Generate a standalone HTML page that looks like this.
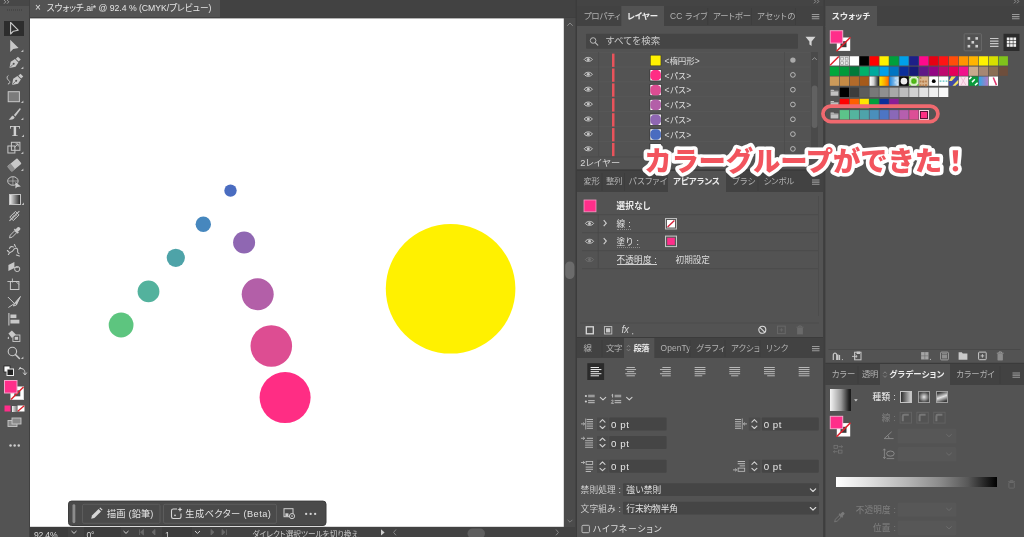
<!DOCTYPE html>
<html lang="ja"><head><meta charset="utf-8"><title>スウォッチ.ai - Illustrator</title><style>
html,body{margin:0;padding:0}
body{width:1024px;height:537px;overflow:hidden;background:#424242;position:relative;
 font-family:"Liberation Sans","Noto Sans CJK JP",sans-serif;}
#app{position:absolute;left:0;top:0;width:1024px;height:537px;overflow:hidden;background:#424242}
#app div,#app span,#app svg{position:absolute;box-sizing:border-box}
#app svg{overflow:visible}
.tt{white-space:nowrap}
#app{will-change:transform}
.t{white-space:nowrap;letter-spacing:0;font-feature-settings:"palt" 1;font-kerning:normal}
</style></head><body>
<div id="app">
<svg style="left:0px;top:0px" width="30" height="537"><rect x="0.00" y="0.00" width="30.00" height="537.00" fill="#535353"/></svg>
<svg style="left:0px;top:0px" width="30" height="6"><rect x="0.00" y="0.00" width="30.00" height="6.00" fill="#474747"/></svg>
<svg style="left:29px;top:0px" width="1" height="537"><rect x="0.00" y="0.00" width="1.00" height="537.00" fill="#414141"/></svg>
<svg style="left:3px;top:-1px;" width="8" height="7"><g transform="translate(0.00 0.40)"><path d="M1 0.5 L2.8 2.4 L1 4.3 M4 0.5 L5.8 2.4 L4 4.3" fill="none" stroke="#a8a8a8" stroke-width="0.9"/></g></svg>
<div style="left:7px;top:9px;width:16px;height:2px;background:repeating-linear-gradient(90deg,#474747 0 1px,transparent 1px 2px);"></div>
<svg style="left:4px;top:21px" width="20" height="15"><rect x="0.00" y="0.00" width="20.00" height="15.00" fill="#2d2d2d"/></svg>
<svg style="left:-1px;top:20px;" width="31" height="17"><g transform="translate(0.40 0.00)"><path d="M11.2 2.5 L11.2 14 L14 11.2 L18.8 10.2 Z" fill="none" stroke="#c8c8c8" stroke-width="1.1" stroke-linejoin="round"/></g></svg>
<svg style="left:-1px;top:37px;" width="31" height="18"><g transform="translate(0.40 0.50)"><path d="M10.8 2.2 L10.8 14.6 L13.8 11.6 L19.2 10.6 Z" fill="#c8c8c8"/><path d="M24 14.5 L24 12 L21.5 14.5z" fill="#bdbdbd"/></g></svg>
<svg style="left:-1px;top:54px;" width="31" height="18"><g transform="translate(0.40 0.50)"><g transform="rotate(45 15 8.5)"><path d="M13 1.5 h4 v3 h-4z" fill="#c8c8c8"/><path d="M12.6 5.3 h4.8 l1 5 l-3.4 5.2 l-3.4-5.2z" fill="#c8c8c8"/><circle cx="15" cy="9.5" r="1" fill="#535353"/><path d="M15 10.5 V15" stroke="#535353" stroke-width="0.7"/></g><path d="M24 14.5 L24 12 L21.5 14.5z" fill="#bdbdbd"/></g></svg>
<svg style="left:-1px;top:71px;" width="31" height="18"><g transform="translate(0.40 0.50)"><g transform="translate(2.5 0)"><g transform="rotate(45 15 8.5)"><path d="M13 1.5 h4 v3 h-4z" fill="#c8c8c8"/><path d="M12.6 5.3 h4.8 l1 5 l-3.4 5.2 l-3.4-5.2z" fill="#c8c8c8"/><circle cx="15" cy="9.5" r="1" fill="#535353"/><path d="M15 10.5 V15" stroke="#535353" stroke-width="0.7"/></g></g><path d="M9 4 C7 5 7.5 8 9.5 9 C11 10 10.5 12.5 8.5 12.5" fill="none" stroke="#c8c8c8" stroke-width="1"/></g></svg>
<svg style="left:-1px;top:88px;" width="31" height="18"><g transform="translate(0.40 0.50)"><rect x="8.8" y="3.2" width="11.2" height="10" fill="#7b7b7b" stroke="#c8c8c8" stroke-width="1"/><path d="M24 14.5 L24 12 L21.5 14.5z" fill="#bdbdbd"/></g></svg>
<svg style="left:-1px;top:105px;" width="31" height="18"><g transform="translate(0.40 0.50)"><path d="M20.5 2.5 L14.5 9.5 L16 11 L21.5 3.5z" fill="#c8c8c8"/><path d="M13.6 10.2 C11.5 10.2 11.5 13 9.3 14 C12 14.8 15.2 13.8 15.2 11.8z" fill="#c8c8c8"/><path d="M24 14.5 L24 12 L21.5 14.5z" fill="#bdbdbd"/></g></svg>
<span class="tt" style="left:8px;top:122px;width:14px;text-align:center;font-family:'Liberation Serif',serif;font-size:15.5px;font-weight:700;line-height:18px;color:#d0d0d0">T</span>
<svg style="left:0px;top:122px;" width="30" height="18"><g transform="translate(0.00 0.50)"><path d="M24 14.5 L24 12 L21.5 14.5z" fill="#bdbdbd"/></g></svg>
<svg style="left:-1px;top:139px;" width="31" height="18"><g transform="translate(0.40 0.50)"><rect x="8.5" y="6.5" width="7" height="7" fill="none" stroke="#c8c8c8" stroke-width="1"/><rect x="12" y="2.8" width="8.5" height="8" fill="none" stroke="#c8c8c8" stroke-width="1"/><path d="M15 8 L18.6 4.6 M18.8 7 V4.4 H16.2" fill="none" stroke="#c8c8c8" stroke-width="0.9"/><path d="M24 14.5 L24 12 L21.5 14.5z" fill="#bdbdbd"/></g></svg>
<svg style="left:-1px;top:156px;" width="31" height="18"><g transform="translate(0.40 0.50)"><g transform="rotate(-40 15 8.5)"><rect x="8.5" y="5" width="13" height="7" rx="1" fill="#c8c8c8"/><rect x="8.5" y="5" width="4.5" height="7" rx="1" fill="#8d8d8d"/></g><path d="M24 14.5 L24 12 L21.5 14.5z" fill="#bdbdbd"/></g></svg>
<svg style="left:-1px;top:173px;" width="31" height="18"><g transform="translate(0.40 0.50)"><ellipse cx="13.5" cy="7.5" rx="5.2" ry="4.3" fill="none" stroke="#c8c8c8" stroke-width="1"/><path d="M9 7.5 h9 M13.5 3.5 v8" stroke="#c8c8c8" stroke-width="0.6"/><path d="M16 8.5 L16 15 L17.8 13.4 L21.5 13 Z" fill="#c8c8c8"/></g></svg>
<div style="left:8.5px;top:193.5px;width:12px;height:11px;background:linear-gradient(90deg,#e8e8e8,#2c2c2c);border:1px solid #c4c4c4"></div>
<svg style="left:0px;top:190px;" width="30" height="18"><g transform="translate(0.00 0.50)"><path d="M24 14.5 L24 12 L21.5 14.5z" fill="#bdbdbd"/></g></svg>
<svg style="left:-1px;top:207px;" width="31" height="18"><g transform="translate(0.40 0.50)"><g transform="rotate(-45 15 8.5)"><path d="M8 8.5 H22" stroke="#c8c8c8" stroke-width="1"/><rect x="11" y="6" width="8" height="5" fill="none" stroke="#c8c8c8" stroke-width="0.9"/><path d="M13 6 v5 M15 6 v5 M17 6 v5" stroke="#c8c8c8" stroke-width="0.6"/></g></g></svg>
<svg style="left:-1px;top:224px;" width="31" height="18"><g transform="translate(0.40 0.50)"><g transform="rotate(45 15 8.5)"><rect x="13.3" y="1" width="3.4" height="4.5" rx="1.2" fill="#c8c8c8"/><rect x="12.2" y="5" width="5.6" height="1.6" fill="#c8c8c8"/><path d="M13.6 6.8 h2.8 v6.2 l-1.4 2.4 l-1.4-2.4z" fill="none" stroke="#c8c8c8" stroke-width="0.9"/></g></g></svg>
<svg style="left:-1px;top:241px;" width="31" height="18"><g transform="translate(0.40 0.50)"><path d="M9 13 C11 9 12 12 14 8.5 C15 6.5 17 6 18 7.5 C19 9 17 11 19.5 12 M10 7 C11 5 12.5 4.5 14 5.5 M15 3 l1 2 M9.5 10.5 l-1.5-1.5 M17 13.5 l3 1" fill="none" stroke="#c8c8c8" stroke-width="1.1" stroke-linecap="round"/></g></svg>
<svg style="left:-1px;top:258px;" width="31" height="18"><g transform="translate(0.40 0.50)"><path d="M9 6.5 L15 3.5 L15 9.5 L9 12.5z" fill="#c8c8c8"/><circle cx="17.8" cy="10.5" r="2.6" fill="none" stroke="#c8c8c8" stroke-width="1"/><path d="M14 9 h5" stroke="#c8c8c8" stroke-width="0.8"/></g></svg>
<svg style="left:-1px;top:276px;" width="31" height="17"><g transform="translate(0.40 0.00)"><rect x="11" y="5.5" width="8.5" height="8" fill="none" stroke="#c8c8c8" stroke-width="1"/><path d="M8 5.5 H12 M13 2.5 V6.5 M16.5 5.5 l3 3" stroke="#c8c8c8" stroke-width="0.9" fill="none"/></g></svg>
<svg style="left:-1px;top:293px;" width="31" height="18"><g transform="translate(0.40 0.50)"><path d="M8.5 3.5 L15 10 L9 14 M21 3 L15.5 9.5 L14 12.5 L17 11.5z" fill="none" stroke="#c8c8c8" stroke-width="1"/><path d="M21 3 L15.5 9.5 L17 11.5z" fill="#c8c8c8"/></g></svg>
<svg style="left:-1px;top:310px;" width="31" height="18"><g transform="translate(0.40 0.50)"><path d="M9.5 2.5 V15" stroke="#c8c8c8" stroke-width="1.1"/><rect x="11" y="4" width="6" height="3.6" fill="#c8c8c8"/><rect x="11" y="9.2" width="9" height="3.8" fill="#c8c8c8"/></g></svg>
<svg style="left:-1px;top:327px;" width="31" height="18"><g transform="translate(0.40 0.50)"><path d="M9 6 L12.5 3 L16.5 7 L12.5 10.5z" fill="#c8c8c8"/><rect x="13.5" y="7.5" width="7" height="6.5" fill="none" stroke="#c8c8c8" stroke-width="0.9"/><rect x="15.3" y="9.3" width="3.4" height="3" fill="#c8c8c8"/><path d="M9 9 c-1 1.5 -1 2.5 0 2.5 s1-1 0-2.5" fill="#c8c8c8"/></g></svg>
<svg style="left:-1px;top:344px;" width="31" height="18"><g transform="translate(0.40 0.50)"><circle cx="13" cy="7" r="4.2" fill="none" stroke="#c8c8c8" stroke-width="1.1"/><path d="M16 10 L20 14" stroke="#c8c8c8" stroke-width="1.6" stroke-linecap="round"/><path d="M24 14.5 L24 12 L21.5 14.5z" fill="#bdbdbd"/></g></svg>
<svg style="left:3px;top:365px;" width="12" height="12"><g transform="translate(0.00 0.00)"><rect x="1" y="1" width="6" height="6" fill="#fff" stroke="#222" stroke-width="0.8"/><rect x="4" y="4" width="6.5" height="6.5" fill="#222" stroke="#eee" stroke-width="1"/></g></svg>
<svg style="left:18px;top:365px;" width="10" height="12"><g transform="translate(0.00 0.00)"><path d="M2 3.5 C5.5 3 7 5 7 9 M0.8 4.8 L2.2 2.2 L4.2 4.4 M5.2 7.6 L7 10 L8.8 7.6" fill="none" stroke="#c8c8c8" stroke-width="1"/></g></svg>
<svg style="left:10px;top:386px" width="14" height="14"><rect x="0.75" y="0.75" width="13.00" height="13.00" fill="#ffffff" stroke="#ddd" stroke-width="0.5"/></svg>
<svg style="left:10px;top:386px;" width="14" height="14"><g transform="translate(0.50 0.50)"><rect x="3.8" y="3.8" width="6" height="6" fill="#535353"/><path d="M0.5 13 L13 0.5" stroke="#e0202a" stroke-width="1.5"/></g></svg>
<svg style="left:4px;top:380px" width="14" height="14"><rect x="0.50" y="0.50" width="12.50" height="12.50" fill="#ff2e8a" stroke="#f3a3c8" stroke-width="1.0"/></svg>
<svg style="left:4px;top:405px" width="7" height="7"><rect x="0.50" y="0.50" width="6.00" height="6.00" fill="#ff2e8a"/></svg>
<div style="left:11.5px;top:405.5px;width:5px;height:6px;background:linear-gradient(90deg,#f4f4f4,#777);"></div>
<svg style="left:17px;top:405px;" width="8" height="7"><g transform="translate(0.50 0.50)"><rect x="0" y="0" width="7" height="6" fill="#fff"/><path d="M0.3 5.8 L6.7 0.2" stroke="#e0202a" stroke-width="1.3"/></g></svg>
<svg style="left:7px;top:417px;" width="16" height="11"><g transform="translate(0.00 0.00)"><rect x="1" y="3.5" width="9" height="6" fill="#8a8a8a" stroke="#c8c8c8" stroke-width="0.9"/><rect x="5" y="1" width="9" height="6" fill="#8a8a8a" stroke="#c8c8c8" stroke-width="0.9"/></g></svg>
<svg style="left:9px;top:444px" width="3" height="3"><rect x="0.30" y="0.30" width="2.50" height="2.50" rx="1.25" fill="#cdcdcd"/></svg>
<svg style="left:13px;top:444px" width="3" height="3"><rect x="0.40" y="0.30" width="2.50" height="2.50" rx="1.25" fill="#cdcdcd"/></svg>
<svg style="left:17px;top:444px" width="3" height="3"><rect x="0.50" y="0.30" width="2.50" height="2.50" rx="1.25" fill="#cdcdcd"/></svg>
<svg style="left:30px;top:0px" width="547" height="18"><rect x="0.00" y="0.00" width="547.00" height="18.00" fill="#424242"/></svg>
<svg style="left:30px;top:0px" width="190" height="18"><rect x="0.00" y="0.00" width="190.00" height="18.00" fill="#535353"/></svg>
<svg style="left:30px;top:17px" width="547" height="2"><rect x="0.00" y="0.20" width="547.00" height="1.20" fill="#3f3f3f"/></svg>
<span class="t" style="left:35.00px;top:0.80px;font-size:10px;line-height:14px;color:#e0e0e0;font-weight:400;letter-spacing:0.000px;">×</span>
<span class="t" style="left:46.77px;top:0.90px;font-size:8.7px;line-height:14px;color:#e6e6e6;font-weight:400;letter-spacing:-0.033px;">スウォッチ.ai* @ 92.4 % (CMYK/プレビュー)</span>
<svg style="left:30px;top:18px" width="534" height="509"><rect x="0.00" y="0.40" width="533.80" height="508.40" fill="#ffffff"/></svg>
<svg style="left:30px;top:18px;" width="534" height="509"><g transform="translate(0.00 0.00)"><circle cx="200.5" cy="172.6" r="6.2" fill="#4a6cc0"/><circle cx="173.3" cy="206.2" r="7.7" fill="#4687be"/><circle cx="214.1" cy="224.5" r="11.0" fill="#8f67b2"/><circle cx="145.8" cy="239.8" r="9.1" fill="#4ea3a8"/><circle cx="118.5" cy="273.4" r="10.9" fill="#53b29d"/><circle cx="91.1" cy="307.0" r="12.4" fill="#5dc57f"/><circle cx="227.7" cy="276.2" r="16.0" fill="#b35fa8"/><circle cx="241.3" cy="328.0" r="20.8" fill="#dd4d92"/><circle cx="255.10000000000002" cy="379.6" r="25.5" fill="#ff2d84"/><circle cx="420.6" cy="270.8" r="64.8" fill="#fff100"/></g></svg>
<svg style="left:564px;top:18px" width="12" height="509"><rect x="0.00" y="0.00" width="12.00" height="509.00" fill="#4b4b4b"/></svg>
<svg style="left:575px;top:0px" width="3" height="537"><rect x="0.50" y="0.00" width="1.80" height="537.00" fill="#3c3c3c"/></svg>
<svg style="left:564px;top:18px;" width="12" height="12"><g transform="translate(0.00 0.00)"><path d="M3.3 7.8 L6 5 L8.7 7.8" fill="none" stroke="#8a8a8a" stroke-width="1"/></g></svg>
<svg style="left:564px;top:515px;" width="12" height="12"><g transform="translate(0.00 0.00)"><path d="M3.6 4.8 L6 7.2 L8.4 4.8" fill="none" stroke="#808080" stroke-width="1"/></g></svg>
<svg style="left:565px;top:261px" width="10" height="18"><rect x="0.20" y="0.50" width="9.20" height="17.50" rx="4.50" fill="#6b6b6b"/></svg>
<svg style="left:30px;top:527px" width="546" height="10"><rect x="0.00" y="0.00" width="546.00" height="10.00" fill="#424242"/></svg>
<svg style="left:30px;top:527px" width="38" height="10"><rect x="0.00" y="0.00" width="38.00" height="10.00" fill="#3c3c3c"/></svg>
<span class="t" style="left:34.07px;top:528.30px;font-size:8.6px;line-height:14px;color:#d8d8d8;font-weight:400;letter-spacing:-0.226px;">92.4%</span>
<svg style="left:69px;top:529px;" width="10" height="8"><g transform="translate(0.00 0.00)"><path d="M2.5 2 L5 4.4 L7.5 2" fill="none" stroke="#cfcfcf" stroke-width="1"/></g></svg>
<svg style="left:84px;top:527px" width="37" height="10"><rect x="0.00" y="0.00" width="37.00" height="10.00" fill="#3c3c3c"/></svg>
<span class="t" style="left:86.57px;top:528.30px;font-size:8.6px;line-height:14px;color:#d8d8d8;font-weight:400;letter-spacing:-0.239px;">0°</span>
<svg style="left:121px;top:529px;" width="10" height="8"><g transform="translate(0.00 0.00)"><path d="M2.5 2 L5 4.4 L7.5 2" fill="none" stroke="#cfcfcf" stroke-width="1"/></g></svg>
<svg style="left:136px;top:528px;" width="22" height="9"><g transform="translate(0.00 0.00)"><path d="M3.5 1.5 V7 M7.5 1.5 L4.5 4.2 L7.5 7z M19 1.5 L16 4.2 L19 7z" fill="#6a6a6a" stroke="#6a6a6a" stroke-width="0.8"/></g></svg>
<svg style="left:162px;top:527px" width="30" height="10"><rect x="0.00" y="0.00" width="30.00" height="10.00" fill="#3c3c3c"/></svg>
<span class="t" style="left:165.07px;top:528.30px;font-size:8.6px;line-height:14px;color:#d8d8d8;font-weight:400;letter-spacing:0.000px;">1</span>
<svg style="left:192px;top:529px;" width="11" height="8"><g transform="translate(0.50 0.00)"><path d="M2.5 2 L5 4.4 L7.5 2" fill="none" stroke="#cfcfcf" stroke-width="1"/></g></svg>
<svg style="left:208px;top:528px;" width="22" height="9"><g transform="translate(0.00 0.00)"><path d="M3 1.5 L6 4.2 L3 7z M14 1.5 L17 4.2 L14 7z M18.5 1.5 V7" fill="#6a6a6a" stroke="#6a6a6a" stroke-width="0.8"/></g></svg>
<span class="t" style="left:252.42px;top:528.40px;font-size:7.7px;line-height:14px;color:#c8c8c8;font-weight:400;letter-spacing:-0.031px;">ダイレクト選択ツールを切り換え</span>
<svg style="left:380px;top:528px;" width="6" height="9"><g transform="translate(0.00 0.00)"><path d="M1 1.2 L4.6 4.4 L1 7.6z" fill="#d0d0d0"/></g></svg>
<svg style="left:392px;top:528px;" width="6" height="9"><g transform="translate(0.00 0.00)"><path d="M4 1.5 L1.6 4.4 L4 7.3" fill="none" stroke="#8a8a8a" stroke-width="0.9"/></g></svg>
<svg style="left:467px;top:528px" width="18" height="11"><rect x="0.50" y="0.60" width="17.50" height="10.00" rx="5.00" fill="#5e5e5e"/></svg>
<svg style="left:554px;top:528px;" width="6" height="9"><g transform="translate(0.00 0.00)"><path d="M2 1.5 L4.4 4.4 L2 7.3" fill="none" stroke="#8a8a8a" stroke-width="0.9"/></g></svg>
<svg style="left:68px;top:500px" width="259" height="26"><rect x="0.50" y="1.10" width="257.50" height="24.40" rx="3.00" fill="#4a4a4a" stroke="#3d3d3d" stroke-width="1.0"/></svg>
<svg style="left:72px;top:504px" width="4" height="20"><rect x="0.50" y="0.20" width="2.80" height="19.00" rx="1.40" fill="#8c8c8c"/></svg>
<svg style="left:82px;top:503px" width="79" height="21"><rect x="0.50" y="1.30" width="77.50" height="19.00" rx="1.50" fill="#4a4a4a" stroke="#5c5c5c" stroke-width="1.0"/></svg>
<svg style="left:163px;top:503px" width="114" height="21"><rect x="0.50" y="1.30" width="113.00" height="19.00" rx="1.50" fill="#4a4a4a" stroke="#5c5c5c" stroke-width="1.0"/></svg>
<svg style="left:90px;top:507px;" width="13" height="13"><g transform="translate(0.00 0.00)"><path d="M1.2 11.8 L2 8.6 L8.6 2 L11 4.4 L4.4 11z" fill="#d6d6d6"/><path d="M9.4 1.2 L10.3 0.4 L12.6 2.7 L11.8 3.6z" fill="#d6d6d6"/></g></svg>
<span class="t" style="left:107.04px;top:507.00px;font-size:9.2px;line-height:14px;color:#e4e4e4;font-weight:400;letter-spacing:0.154px;">描画 (鉛筆)</span>
<svg style="left:170px;top:506px;" width="13" height="15"><g transform="translate(0.00 0.50)"><path d="M7 2.5 H3.2 Q1.5 2.5 1.5 4.2 V10.3 Q1.5 12 3.2 12 H9.3 Q11 12 11 10.3 V7" fill="none" stroke="#d6d6d6" stroke-width="1.1"/><path d="M10 0.5 l0.7 1.8 l1.8 0.7 l-1.8 0.7 l-0.7 1.8 l-0.7-1.8 l-1.8-0.7 l1.8-0.7z" fill="#d6d6d6"/><circle cx="5" cy="8.8" r="0.9" fill="#d6d6d6"/></g></svg>
<span class="t" style="left:185.34px;top:507.00px;font-size:9.2px;line-height:14px;color:#e4e4e4;font-weight:400;letter-spacing:0.428px;">生成ベクター (Beta)</span>
<svg style="left:283px;top:507px;" width="13" height="13"><g transform="translate(0.00 0.50)"><rect x="1" y="1.2" width="9" height="8" fill="none" stroke="#d0d0d0" stroke-width="1"/><rect x="2.4" y="5.8" width="3" height="3" fill="#d0d0d0"/><circle cx="9" cy="8.6" r="2.6" fill="#4a4a4a" stroke="#d0d0d0" stroke-width="1"/><circle cx="9" cy="8.6" r="0.8" fill="#d0d0d0"/></g></svg>
<svg style="left:305px;top:512px" width="3" height="4"><rect x="0.00" y="0.80" width="2.30" height="2.30" rx="1.15" fill="#d6d6d6"/></svg>
<svg style="left:309px;top:512px" width="3" height="4"><rect x="0.50" y="0.80" width="2.30" height="2.30" rx="1.15" fill="#d6d6d6"/></svg>
<svg style="left:314px;top:512px" width="3" height="4"><rect x="0.00" y="0.80" width="2.30" height="2.30" rx="1.15" fill="#d6d6d6"/></svg>
<svg style="left:577px;top:0px" width="447" height="6"><rect x="0.00" y="0.00" width="447.00" height="6.00" fill="#444444"/></svg>
<svg style="left:813px;top:-1px;" width="8" height="6"><g transform="translate(0.00 0.00)"><path d="M1 0.5 L2.8 2.4 L1 4.3 M4 0.5 L5.8 2.4 L4 4.3" fill="none" stroke="#9a9a9a" stroke-width="0.9"/></g></svg>
<svg style="left:1013px;top:-1px;" width="8" height="6"><g transform="translate(0.00 0.00)"><path d="M1 0.5 L2.8 2.4 L1 4.3 M4 0.5 L5.8 2.4 L4 4.3" fill="none" stroke="#9a9a9a" stroke-width="0.9"/></g></svg>
<svg style="left:823px;top:0px" width="3" height="537"><rect x="0.00" y="0.00" width="2.50" height="537.00" fill="#454545"/></svg>
<svg style="left:823px;top:0px" width="2" height="537"><rect x="0.50" y="0.00" width="1.20" height="537.00" fill="#3d3d3d"/></svg>
<svg style="left:577px;top:6px" width="246" height="20"><rect x="0.00" y="0.00" width="246.00" height="20.00" fill="#424242"/></svg>
<svg style="left:621px;top:6px" width="43" height="21"><rect x="0.30" y="0.00" width="42.70" height="21.00" fill="#535353"/></svg>
<span class="t" style="left:583.98px;top:8.50px;font-size:8.4px;line-height:14px;color:#b2b2b2;font-weight:400;letter-spacing:-0.197px;">プロパティ</span>
<span class="t" style="left:627.08px;top:8.50px;font-size:8.4px;line-height:14px;color:#ededed;font-weight:700;letter-spacing:-0.073px;">レイヤー</span>
<span class="t" style="left:669.98px;top:8.50px;font-size:8.4px;line-height:14px;color:#b2b2b2;font-weight:400;letter-spacing:0.264px;">CC ライブ</span>
<span class="t" style="left:713.18px;top:8.50px;font-size:8.4px;line-height:14px;color:#b2b2b2;font-weight:400;letter-spacing:-0.131px;">アートボー</span>
<span class="t" style="left:756.98px;top:8.50px;font-size:8.4px;line-height:14px;color:#b2b2b2;font-weight:400;letter-spacing:0.427px;">アセットの</span>
<svg style="left:811px;top:13px;" width="9" height="8"><g transform="translate(0.80 0.90)"><path d="M0 0.6 H7.5 M0 2.7 H7.5 M0 4.8 H7.5" stroke="#9a9a9a" stroke-width="1.1"/></g></svg>
<svg style="left:707px;top:8px" width="2" height="17"><rect x="0.30" y="0.00" width="1.00" height="17.00" fill="#3d3d3d"/></svg>
<svg style="left:751px;top:8px" width="1" height="17"><rect x="0.00" y="0.00" width="1.00" height="17.00" fill="#3d3d3d"/></svg>
<svg style="left:795px;top:8px" width="1" height="17"><rect x="0.00" y="0.00" width="1.00" height="17.00" fill="#3d3d3d"/></svg>
<svg style="left:577px;top:26px" width="246" height="144"><rect x="0.00" y="0.00" width="246.00" height="143.50" fill="#535353"/></svg>
<svg style="left:586px;top:33px" width="212" height="16"><rect x="0.00" y="0.80" width="212.00" height="15.00" rx="1.00" fill="#454545"/></svg>
<svg style="left:589px;top:36px;" width="11" height="11"><g transform="translate(0.20 0.60)"><circle cx="3.9" cy="3.9" r="2.8" fill="none" stroke="#bcbcbc" stroke-width="0.95"/><path d="M6 6 L8.6 8.6" stroke="#bcbcbc" stroke-width="1.1" stroke-linecap="round"/></g></svg>
<span class="t" style="left:605.73px;top:34.20px;font-size:9.5px;line-height:14px;color:#c8c8c8;font-weight:400;letter-spacing:0.216px;">すべてを検索</span>
<svg style="left:805px;top:36px;" width="11" height="11"><g transform="translate(0.00 0.00)"><path d="M0.5 0.8 H10.5 L6.6 5.4 V10 L4.4 8.6 V5.4z" fill="#d4d4d4"/></g></svg>
<svg style="left:581px;top:52px" width="229" height="1"><rect x="0.00" y="0.00" width="229.00" height="0.80" fill="#585858"/></svg>
<svg style="left:581px;top:66px" width="229" height="2"><rect x="0.00" y="0.50" width="229.00" height="0.80" fill="#595959"/></svg>
<svg style="left:583px;top:56px;" width="10" height="7"><g transform="translate(0.80 0.20)"><path d="M0.4 3.2 C2.2 0.5 6.8 0.5 8.6 3.2 C6.8 5.9 2.2 5.9 0.4 3.2z" fill="none" stroke="#c6c6c6" stroke-width="1"/><circle cx="4.5" cy="3.2" r="1.5" fill="#c6c6c6"/></g></svg>
<svg style="left:612px;top:53px" width="3" height="14"><rect x="0.00" y="0.60" width="2.50" height="13.30" fill="#e9535b"/></svg>
<svg style="left:650px;top:54px" width="12" height="13"><rect x="0.25" y="1.15" width="10.70" height="10.70" fill="#fff100" stroke="#2a2a2a" stroke-width="0.5"/></svg>
<span class="t" style="left:664.58px;top:53.70px;font-size:8.5px;line-height:14px;color:#dedede;font-weight:400;letter-spacing:-0.086px;">&lt;楕円形&gt;</span>
<svg style="left:790px;top:57px" width="6" height="6"><rect x="0.20" y="0.40" width="5.40" height="5.40" rx="2.70" fill="#a9a9a9"/></svg>
<svg style="left:581px;top:81px" width="229" height="2"><rect x="0.00" y="0.40" width="229.00" height="0.80" fill="#595959"/></svg>
<svg style="left:583px;top:71px;" width="10" height="7"><g transform="translate(0.80 0.10)"><path d="M0.4 3.2 C2.2 0.5 6.8 0.5 8.6 3.2 C6.8 5.9 2.2 5.9 0.4 3.2z" fill="none" stroke="#c6c6c6" stroke-width="1"/><circle cx="4.5" cy="3.2" r="1.5" fill="#c6c6c6"/></g></svg>
<svg style="left:612px;top:68px" width="3" height="14"><rect x="0.00" y="0.50" width="2.50" height="13.30" fill="#e9535b"/></svg>
<svg style="left:649px;top:69px" width="13" height="13"><rect x="1.00" y="0.70" width="11.20" height="11.20" fill="#ffffff" stroke="#222" stroke-width="0.6"/></svg>
<svg style="left:650px;top:70px;" width="11" height="11"><g transform="translate(0.30 0.00)"><clipPath id="c114"><rect x="0" y="0" width="10.6" height="10.6"/></clipPath><g clip-path="url(#c114)"><circle cx="5.3" cy="5.3" r="5.7" fill="#ff2d84"/></g></g></svg>
<span class="t" style="left:664.58px;top:68.50px;font-size:8.5px;line-height:14px;color:#dedede;font-weight:400;letter-spacing:0.363px;">&lt;パス&gt;</span>
<svg style="left:790px;top:72px" width="6" height="6"><rect x="0.55" y="0.55" width="4.70" height="4.70" rx="2.35" fill="none" stroke="#c2c2c2" stroke-width="0.9"/></svg>
<svg style="left:581px;top:96px" width="229" height="2"><rect x="0.00" y="0.30" width="229.00" height="0.80" fill="#595959"/></svg>
<svg style="left:583px;top:86px;" width="10" height="7"><g transform="translate(0.80 0.00)"><path d="M0.4 3.2 C2.2 0.5 6.8 0.5 8.6 3.2 C6.8 5.9 2.2 5.9 0.4 3.2z" fill="none" stroke="#c6c6c6" stroke-width="1"/><circle cx="4.5" cy="3.2" r="1.5" fill="#c6c6c6"/></g></svg>
<svg style="left:612px;top:83px" width="3" height="14"><rect x="0.00" y="0.40" width="2.50" height="13.30" fill="#e9535b"/></svg>
<svg style="left:649px;top:84px" width="13" height="12"><rect x="1.00" y="0.50" width="11.20" height="11.20" fill="#ffffff" stroke="#222" stroke-width="0.6"/></svg>
<svg style="left:650px;top:84px;" width="11" height="12"><g transform="translate(0.30 0.80)"><clipPath id="c121"><rect x="0" y="0" width="10.6" height="10.6"/></clipPath><g clip-path="url(#c121)"><circle cx="5.3" cy="5.3" r="5.7" fill="#dd4d92"/></g></g></svg>
<span class="t" style="left:664.58px;top:83.30px;font-size:8.5px;line-height:14px;color:#dedede;font-weight:400;letter-spacing:0.363px;">&lt;パス&gt;</span>
<svg style="left:790px;top:86px" width="6" height="7"><rect x="0.55" y="1.35" width="4.70" height="4.70" rx="2.35" fill="none" stroke="#c2c2c2" stroke-width="0.9"/></svg>
<svg style="left:581px;top:111px" width="229" height="1"><rect x="0.00" y="0.20" width="229.00" height="0.80" fill="#595959"/></svg>
<svg style="left:583px;top:100px;" width="10" height="8"><g transform="translate(0.80 0.90)"><path d="M0.4 3.2 C2.2 0.5 6.8 0.5 8.6 3.2 C6.8 5.9 2.2 5.9 0.4 3.2z" fill="none" stroke="#c6c6c6" stroke-width="1"/><circle cx="4.5" cy="3.2" r="1.5" fill="#c6c6c6"/></g></svg>
<svg style="left:612px;top:98px" width="3" height="14"><rect x="0.00" y="0.30" width="2.50" height="13.30" fill="#e9535b"/></svg>
<svg style="left:649px;top:99px" width="13" height="12"><rect x="1.00" y="0.30" width="11.20" height="11.20" fill="#ffffff" stroke="#222" stroke-width="0.6"/></svg>
<svg style="left:650px;top:99px;" width="11" height="12"><g transform="translate(0.30 0.60)"><clipPath id="c128"><rect x="0" y="0" width="10.6" height="10.6"/></clipPath><g clip-path="url(#c128)"><circle cx="5.3" cy="5.3" r="5.7" fill="#b35fa8"/></g></g></svg>
<span class="t" style="left:664.58px;top:98.10px;font-size:8.5px;line-height:14px;color:#dedede;font-weight:400;letter-spacing:0.363px;">&lt;パス&gt;</span>
<svg style="left:790px;top:101px" width="6" height="7"><rect x="0.55" y="1.15" width="4.70" height="4.70" rx="2.35" fill="none" stroke="#c2c2c2" stroke-width="0.9"/></svg>
<svg style="left:581px;top:126px" width="229" height="1"><rect x="0.00" y="0.10" width="229.00" height="0.80" fill="#595959"/></svg>
<svg style="left:583px;top:115px;" width="10" height="8"><g transform="translate(0.80 0.80)"><path d="M0.4 3.2 C2.2 0.5 6.8 0.5 8.6 3.2 C6.8 5.9 2.2 5.9 0.4 3.2z" fill="none" stroke="#c6c6c6" stroke-width="1"/><circle cx="4.5" cy="3.2" r="1.5" fill="#c6c6c6"/></g></svg>
<svg style="left:612px;top:113px" width="3" height="14"><rect x="0.00" y="0.20" width="2.50" height="13.30" fill="#e9535b"/></svg>
<svg style="left:649px;top:113px" width="13" height="13"><rect x="1.00" y="1.10" width="11.20" height="11.20" fill="#ffffff" stroke="#222" stroke-width="0.6"/></svg>
<svg style="left:650px;top:114px;" width="11" height="12"><g transform="translate(0.30 0.40)"><clipPath id="c135"><rect x="0" y="0" width="10.6" height="10.6"/></clipPath><g clip-path="url(#c135)"><circle cx="5.3" cy="5.3" r="5.7" fill="#8f67b2"/></g></g></svg>
<span class="t" style="left:664.58px;top:112.90px;font-size:8.5px;line-height:14px;color:#dedede;font-weight:400;letter-spacing:0.363px;">&lt;パス&gt;</span>
<svg style="left:790px;top:116px" width="6" height="7"><rect x="0.55" y="0.95" width="4.70" height="4.70" rx="2.35" fill="none" stroke="#c2c2c2" stroke-width="0.9"/></svg>
<svg style="left:581px;top:141px" width="229" height="1"><rect x="0.00" y="0.00" width="229.00" height="0.80" fill="#595959"/></svg>
<svg style="left:583px;top:130px;" width="10" height="8"><g transform="translate(0.80 0.70)"><path d="M0.4 3.2 C2.2 0.5 6.8 0.5 8.6 3.2 C6.8 5.9 2.2 5.9 0.4 3.2z" fill="none" stroke="#c6c6c6" stroke-width="1"/><circle cx="4.5" cy="3.2" r="1.5" fill="#c6c6c6"/></g></svg>
<svg style="left:612px;top:128px" width="3" height="14"><rect x="0.00" y="0.10" width="2.50" height="13.30" fill="#e9535b"/></svg>
<svg style="left:649px;top:128px" width="13" height="13"><rect x="1.00" y="0.90" width="11.20" height="11.20" fill="#ffffff" stroke="#222" stroke-width="0.6"/></svg>
<svg style="left:650px;top:129px;" width="11" height="11"><g transform="translate(0.30 0.20)"><clipPath id="c142"><rect x="0" y="0" width="10.6" height="10.6"/></clipPath><g clip-path="url(#c142)"><circle cx="5.3" cy="5.3" r="5.7" fill="#4a6cc0"/></g></g></svg>
<span class="t" style="left:664.58px;top:127.70px;font-size:8.5px;line-height:14px;color:#dedede;font-weight:400;letter-spacing:0.363px;">&lt;パス&gt;</span>
<svg style="left:790px;top:131px" width="6" height="6"><rect x="0.55" y="0.75" width="4.70" height="4.70" rx="2.35" fill="none" stroke="#c2c2c2" stroke-width="0.9"/></svg>
<svg style="left:581px;top:155px" width="229" height="2"><rect x="0.00" y="0.90" width="229.00" height="0.80" fill="#595959"/></svg>
<svg style="left:583px;top:145px;" width="10" height="8"><g transform="translate(0.80 0.60)"><path d="M0.4 3.2 C2.2 0.5 6.8 0.5 8.6 3.2 C6.8 5.9 2.2 5.9 0.4 3.2z" fill="none" stroke="#c6c6c6" stroke-width="1"/><circle cx="4.5" cy="3.2" r="1.5" fill="#c6c6c6"/></g></svg>
<svg style="left:612px;top:143px" width="3" height="14"><rect x="0.00" y="0.00" width="2.50" height="13.30" fill="#e9535b"/></svg>
<svg style="left:649px;top:143px" width="13" height="13"><rect x="1.00" y="0.70" width="11.20" height="11.20" fill="#ffffff" stroke="#222" stroke-width="0.6"/></svg>
<svg style="left:790px;top:146px" width="6" height="6"><rect x="0.55" y="0.55" width="4.70" height="4.70" rx="2.35" fill="none" stroke="#c2c2c2" stroke-width="0.9"/></svg>
<svg style="left:598px;top:52px" width="2" height="105"><rect x="0.30" y="0.00" width="0.80" height="104.30" fill="#4c4c4c"/></svg>
<svg style="left:784px;top:52px" width="1" height="105"><rect x="0.00" y="0.00" width="0.80" height="104.30" fill="#4c4c4c"/></svg>
<svg style="left:811px;top:52px" width="7" height="105"><rect x="0.00" y="0.00" width="7.00" height="104.50" fill="#4a4a4a"/></svg>
<svg style="left:811px;top:55px;" width="7" height="8"><g transform="translate(0.00 0.00)"><path d="M1.2 5 L3.5 2.6 L5.8 5" fill="none" stroke="#9a9a9a" stroke-width="0.9"/></g></svg>
<svg style="left:811px;top:85px" width="7" height="43"><rect x="0.70" y="0.60" width="5.80" height="42.40" rx="2.90" fill="#616161"/></svg>
<svg style="left:581px;top:156px" width="238" height="2"><rect x="0.00" y="0.50" width="238.00" height="0.80" fill="#474747"/></svg>
<span class="t" style="left:580.14px;top:156.20px;font-size:9.2px;line-height:14px;color:#d8d8d8;font-weight:400;letter-spacing:0.286px;">2レイヤー</span>
<svg style="left:577px;top:169px" width="246" height="2"><rect x="0.00" y="0.50" width="246.00" height="1.50" fill="#3b3b3b"/></svg>
<svg style="left:577px;top:171px" width="246" height="21"><rect x="0.00" y="0.00" width="246.00" height="21.00" fill="#424242"/></svg>
<svg style="left:668px;top:171px" width="58" height="22"><rect x="0.00" y="0.00" width="58.00" height="22.00" fill="#535353"/></svg>
<span class="t" style="left:583.48px;top:174.20px;font-size:8.4px;line-height:14px;color:#b2b2b2;font-weight:400;letter-spacing:-0.273px;">変形</span>
<span class="t" style="left:605.98px;top:174.20px;font-size:8.4px;line-height:14px;color:#b2b2b2;font-weight:400;letter-spacing:-0.273px;">整列</span>
<span class="t" style="left:628.78px;top:174.20px;font-size:8.4px;line-height:14px;color:#b2b2b2;font-weight:400;letter-spacing:0.436px;">パスファイ</span>
<span class="t" style="left:673.18px;top:174.20px;font-size:8.4px;line-height:14px;color:#ededed;font-weight:700;letter-spacing:-0.019px;">アピアランス</span>
<span class="t" style="left:732.38px;top:174.20px;font-size:8.4px;line-height:14px;color:#b2b2b2;font-weight:400;letter-spacing:0.347px;">ブラシ</span>
<span class="t" style="left:763.48px;top:174.20px;font-size:8.4px;line-height:14px;color:#b2b2b2;font-weight:400;letter-spacing:-0.134px;">シンボル</span>
<svg style="left:812px;top:179px;" width="8" height="8"><g transform="translate(0.00 0.40)"><path d="M0 0.6 H7.5 M0 2.7 H7.5 M0 4.8 H7.5" stroke="#9a9a9a" stroke-width="1.1"/></g></svg>
<svg style="left:601px;top:173px" width="2" height="18"><rect x="0.50" y="0.00" width="1.00" height="18.00" fill="#3d3d3d"/></svg>
<svg style="left:624px;top:173px" width="1" height="18"><rect x="0.00" y="0.00" width="1.00" height="18.00" fill="#3d3d3d"/></svg>
<svg style="left:757px;top:173px" width="2" height="18"><rect x="0.50" y="0.00" width="1.00" height="18.00" fill="#3d3d3d"/></svg>
<svg style="left:577px;top:192px" width="246" height="145"><rect x="0.00" y="0.00" width="246.00" height="145.00" fill="#535353"/></svg>
<svg style="left:583px;top:199px" width="14" height="14"><rect x="1.00" y="1.00" width="12.00" height="11.80" fill="#ff2e8a" stroke="#f59bc4" stroke-width="0.8"/></svg>
<span class="t" style="left:616.57px;top:199.40px;font-size:8.6px;line-height:14px;color:#ededed;font-weight:700;letter-spacing:0.201px;">選択なし</span>
<svg style="left:582px;top:214px" width="236" height="2"><rect x="0.00" y="0.30" width="236.00" height="0.80" fill="#4a4a4a"/></svg>
<svg style="left:582px;top:232px" width="236" height="2"><rect x="0.00" y="0.30" width="236.00" height="0.80" fill="#4a4a4a"/></svg>
<svg style="left:582px;top:250px" width="236" height="2"><rect x="0.00" y="0.30" width="236.00" height="0.80" fill="#4a4a4a"/></svg>
<svg style="left:582px;top:268px" width="236" height="2"><rect x="0.00" y="0.30" width="236.00" height="0.80" fill="#4a4a4a"/></svg>
<svg style="left:597px;top:214px" width="2" height="55"><rect x="0.80" y="0.30" width="0.80" height="54.00" fill="#484848"/></svg>
<svg style="left:818px;top:196px" width="1" height="120"><rect x="0.00" y="0.00" width="0.80" height="120.00" fill="#4c4c4c"/></svg>
<svg style="left:585px;top:220px;" width="9" height="7"><g transform="translate(0.00 0.20)"><path d="M0.4 3.2 C2.2 0.5 6.8 0.5 8.6 3.2 C6.8 5.9 2.2 5.9 0.4 3.2z" fill="none" stroke="#c6c6c6" stroke-width="1"/><circle cx="4.5" cy="3.2" r="1.5" fill="#c6c6c6"/></g></svg>
<svg style="left:602px;top:219px;" width="6" height="9"><g transform="translate(0.50 0.20)"><path d="M1.2 1 L3.8 4 L1.2 7" fill="none" stroke="#cfcfcf" stroke-width="1.1"/></g></svg>
<span class="t" style="left:616.57px;top:216.60px;font-size:8.6px;line-height:14px;color:#e2e2e2;font-weight:400;letter-spacing:0.314px;border-bottom:0.7px dotted #8c8c8c;height:13px">線 :</span>
<svg style="left:665px;top:218px;" width="12" height="12"><g transform="translate(0.00 0.00)"><rect x="0.5" y="0.5" width="11" height="10.5" fill="#5a5a5a" stroke="#bdbdbd" stroke-width="1"/><rect x="2" y="2" width="8" height="7.5" fill="#fff"/><path d="M2.6 9 L9.4 2.5" stroke="#d6203a" stroke-width="1.4"/></g></svg>
<svg style="left:585px;top:238px;" width="9" height="7"><g transform="translate(0.00 0.10)"><path d="M0.4 3.2 C2.2 0.5 6.8 0.5 8.6 3.2 C6.8 5.9 2.2 5.9 0.4 3.2z" fill="none" stroke="#c6c6c6" stroke-width="1"/><circle cx="4.5" cy="3.2" r="1.5" fill="#c6c6c6"/></g></svg>
<svg style="left:602px;top:237px;" width="6" height="9"><g transform="translate(0.50 0.10)"><path d="M1.2 1 L3.8 4 L1.2 7" fill="none" stroke="#cfcfcf" stroke-width="1.1"/></g></svg>
<span class="t" style="left:616.57px;top:234.50px;font-size:8.6px;line-height:14px;color:#e2e2e2;font-weight:400;letter-spacing:0.608px;border-bottom:0.7px dotted #8c8c8c;height:13px">塗り :</span>
<svg style="left:665px;top:235px;" width="12" height="13"><g transform="translate(0.00 0.60)"><rect x="0.5" y="0.5" width="11" height="10.5" fill="#5a5a5a" stroke="#c8c8c8" stroke-width="1"/><rect x="2.2" y="2.2" width="7.6" height="7.1" fill="#ff2e8a"/></g></svg>
<svg style="left:585px;top:256px;" width="9" height="7"><g transform="translate(0.00 0.40)"><path d="M0.4 3.2 C2.2 0.5 6.8 0.5 8.6 3.2 C6.8 5.9 2.2 5.9 0.4 3.2z" fill="none" stroke="#6f6f6f" stroke-width="1"/><circle cx="4.5" cy="3.2" r="1.5" fill="#6f6f6f"/></g></svg>
<span class="t" style="left:616.57px;top:252.80px;font-size:8.6px;line-height:14px;color:#e2e2e2;font-weight:400;letter-spacing:0.182px;border-bottom:0.8px solid #cfcfcf;height:12.6px">不透明度 :</span>
<span class="t" style="left:675.57px;top:252.80px;font-size:8.6px;line-height:14px;color:#dcdcdc;font-weight:400;letter-spacing:-0.009px;">初期設定</span>
<svg style="left:580px;top:322px" width="239" height="2"><rect x="0.00" y="0.60" width="239.00" height="0.80" fill="#4b4b4b"/></svg>
<svg style="left:585px;top:326px;" width="10" height="9"><g transform="translate(0.50 0.00)"><rect x="0.8" y="0.8" width="7" height="7" fill="none" stroke="#dadada" stroke-width="1.3"/></g></svg>
<svg style="left:603px;top:326px;" width="10" height="9"><g transform="translate(0.80 0.00)"><rect x="0.6" y="0.6" width="7.4" height="7.4" fill="none" stroke="#c4c4c4" stroke-width="0.9"/><rect x="2.2" y="2.2" width="4.2" height="4.2" fill="#c8c8c8"/></g></svg>
<span class="t" style="left:621.50px;top:322.80px;font-size:10px;line-height:14px;color:#d2d2d2;font-weight:400;letter-spacing:0.000px;font-style:italic;letter-spacing:-0.3px">fx</span>
<svg style="left:632px;top:333px" width="2" height="2"><rect x="0.20" y="0.00" width="1.00" height="1.40" fill="#c0c0c0"/></svg>
<svg style="left:758px;top:325px;" width="9" height="10"><g transform="translate(0.00 0.50)"><circle cx="4.3" cy="4.3" r="3.5" fill="none" stroke="#dcdcdc" stroke-width="1.1"/><path d="M1.9 1.9 L6.7 6.7" stroke="#dcdcdc" stroke-width="1.1"/></g></svg>
<svg style="left:777px;top:325px;" width="9" height="10"><g transform="translate(0.00 0.50)"><rect x="0.6" y="0.6" width="7.6" height="7.6" fill="none" stroke="#6a6a6a" stroke-width="0.9"/><path d="M4.4 2.6 V6.2 M2.6 4.4 H6.2" stroke="#6a6a6a" stroke-width="0.8"/></g></svg>
<svg style="left:795px;top:325px;" width="10" height="10"><g transform="translate(0.50 0.00)"><path d="M1 2.2 H8 M3.2 2 V1 H5.8 V2" stroke="#6c6c6c" stroke-width="0.9" fill="none"/><rect x="1.6" y="3" width="5.8" height="6.4" fill="#6a6a6a"/></g></svg>
<svg style="left:577px;top:337px" width="246" height="2"><rect x="0.00" y="0.00" width="246.00" height="1.20" fill="#3b3b3b"/></svg>
<svg style="left:577px;top:338px" width="246" height="20"><rect x="0.00" y="0.00" width="246.00" height="20.00" fill="#424242"/></svg>
<svg style="left:624px;top:338px" width="31" height="21"><rect x="0.00" y="0.00" width="30.30" height="21.00" fill="#535353"/></svg>
<span class="t" style="left:583.48px;top:340.70px;font-size:8.4px;line-height:14px;color:#b2b2b2;font-weight:400;letter-spacing:-0.070px;">線</span>
<span class="t" style="left:605.98px;top:340.70px;font-size:8.4px;line-height:14px;color:#b2b2b2;font-weight:400;letter-spacing:-0.273px;">文字</span>
<span class="t" style="left:633.38px;top:340.70px;font-size:8.4px;line-height:14px;color:#ededed;font-weight:700;letter-spacing:-0.540px;">段落</span>
<span class="t" style="left:660.58px;top:340.70px;font-size:8.4px;line-height:14px;color:#b2b2b2;font-weight:400;letter-spacing:0.093px;">OpenTy</span>
<span class="t" style="left:696.28px;top:340.70px;font-size:8.4px;line-height:14px;color:#b2b2b2;font-weight:400;letter-spacing:0.237px;">グラフィ</span>
<span class="t" style="left:730.98px;top:340.70px;font-size:8.4px;line-height:14px;color:#b2b2b2;font-weight:400;letter-spacing:0.047px;">アクショ</span>
<span class="t" style="left:765.88px;top:340.70px;font-size:8.4px;line-height:14px;color:#b2b2b2;font-weight:400;letter-spacing:0.331px;">リンク</span>
<svg style="left:812px;top:345px;" width="8" height="8"><g transform="translate(0.00 0.90)"><path d="M0 0.6 H7.5 M0 2.7 H7.5 M0 4.8 H7.5" stroke="#9a9a9a" stroke-width="1.1"/></g></svg>
<svg style="left:601px;top:340px" width="2" height="17"><rect x="0.50" y="0.00" width="1.00" height="17.00" fill="#3d3d3d"/></svg>
<svg style="left:689px;top:340px" width="2" height="17"><rect x="0.50" y="0.00" width="1.00" height="17.00" fill="#3d3d3d"/></svg>
<svg style="left:724px;top:340px" width="2" height="17"><rect x="0.50" y="0.00" width="1.00" height="17.00" fill="#3d3d3d"/></svg>
<svg style="left:759px;top:340px" width="2" height="17"><rect x="0.50" y="0.00" width="1.00" height="17.00" fill="#3d3d3d"/></svg>
<svg style="left:625px;top:343px;" width="7" height="10"><g transform="translate(0.50 0.50)"><path d="M1.3 3.6 L3 1.8 L4.7 3.6 M1.3 5.6 L3 7.4 L4.7 5.6" fill="none" stroke="#8f8f8f" stroke-width="0.8"/></g></svg>
<svg style="left:577px;top:358px" width="246" height="179"><rect x="0.00" y="0.00" width="246.00" height="179.00" fill="#535353"/></svg>
<svg style="left:587px;top:363px" width="18" height="17"><rect x="0.30" y="0.20" width="16.80" height="16.80" fill="#2b2b2b"/></svg>
<svg style="left:590px;top:366px;" width="12" height="11"><g transform="translate(0.50 0.80)"><rect x="0.1" y="0.2" width="8.4" height="0.95" fill="#f2f2f2"/><rect x="0.1" y="2.2800000000000002" width="10.8" height="0.95" fill="#f2f2f2"/><rect x="0.1" y="4.36" width="8.4" height="0.95" fill="#f2f2f2"/><rect x="0.1" y="6.44" width="10.8" height="0.95" fill="#f2f2f2"/><rect x="0.1" y="8.52" width="8.4" height="0.95" fill="#f2f2f2"/></g></svg>
<svg style="left:625px;top:366px;" width="12" height="11"><g transform="translate(0.18 0.80)"><rect x="1.3" y="0.2" width="8.4" height="0.95" fill="#bdbdbd"/><rect x="0.1" y="2.2800000000000002" width="10.8" height="0.95" fill="#bdbdbd"/><rect x="1.9000000000000001" y="4.36" width="7.2" height="0.95" fill="#bdbdbd"/><rect x="0.1" y="6.44" width="10.8" height="0.95" fill="#bdbdbd"/><rect x="1.3" y="8.52" width="8.4" height="0.95" fill="#bdbdbd"/></g></svg>
<svg style="left:659px;top:366px;" width="12" height="11"><g transform="translate(0.86 0.80)"><rect x="2.5" y="0.2" width="8.4" height="0.95" fill="#bdbdbd"/><rect x="0.1" y="2.2800000000000002" width="10.8" height="0.95" fill="#bdbdbd"/><rect x="2.5" y="4.36" width="8.4" height="0.95" fill="#bdbdbd"/><rect x="0.1" y="6.44" width="10.8" height="0.95" fill="#bdbdbd"/><rect x="2.1" y="8.52" width="8.8" height="0.95" fill="#bdbdbd"/></g></svg>
<svg style="left:694px;top:366px;" width="12" height="11"><g transform="translate(0.54 0.80)"><rect x="0.1" y="0.2" width="10.8" height="0.95" fill="#bdbdbd"/><rect x="0.1" y="2.2800000000000002" width="10.8" height="0.95" fill="#bdbdbd"/><rect x="0.1" y="4.36" width="10.8" height="0.95" fill="#bdbdbd"/><rect x="0.1" y="6.44" width="10.8" height="0.95" fill="#bdbdbd"/><rect x="0.1" y="8.52" width="7.6" height="0.95" fill="#bdbdbd"/></g></svg>
<svg style="left:729px;top:366px;" width="12" height="11"><g transform="translate(0.22 0.80)"><rect x="0.1" y="0.2" width="10.8" height="0.95" fill="#bdbdbd"/><rect x="0.1" y="2.2800000000000002" width="10.8" height="0.95" fill="#bdbdbd"/><rect x="0.1" y="4.36" width="10.8" height="0.95" fill="#bdbdbd"/><rect x="0.1" y="6.44" width="10.8" height="0.95" fill="#bdbdbd"/><rect x="1.9000000000000001" y="8.52" width="7.2" height="0.95" fill="#bdbdbd"/></g></svg>
<svg style="left:763px;top:366px;" width="12" height="11"><g transform="translate(0.90 0.80)"><rect x="0.1" y="0.2" width="10.8" height="0.95" fill="#bdbdbd"/><rect x="0.1" y="2.2800000000000002" width="10.8" height="0.95" fill="#bdbdbd"/><rect x="0.1" y="4.36" width="10.8" height="0.95" fill="#bdbdbd"/><rect x="0.1" y="6.44" width="10.8" height="0.95" fill="#bdbdbd"/><rect x="3.3000000000000003" y="8.52" width="7.6" height="0.95" fill="#bdbdbd"/></g></svg>
<svg style="left:798px;top:366px;" width="12" height="11"><g transform="translate(0.58 0.80)"><rect x="0.1" y="0.2" width="10.8" height="0.95" fill="#bdbdbd"/><rect x="0.1" y="2.2800000000000002" width="10.8" height="0.95" fill="#bdbdbd"/><rect x="0.1" y="4.36" width="10.8" height="0.95" fill="#bdbdbd"/><rect x="0.1" y="6.44" width="10.8" height="0.95" fill="#bdbdbd"/><rect x="0.1" y="8.52" width="10.8" height="0.95" fill="#bdbdbd"/></g></svg>
<svg style="left:584px;top:393px;" width="12" height="12"><g transform="translate(0.50 0.50)"><circle cx="1.4" cy="2.5" r="1.1" fill="#cfcfcf"/><rect x="3.6" y="1.2" width="6.6" height="2.6" fill="#9a9a9a"/><circle cx="1.4" cy="8" r="1.1" fill="#cfcfcf"/><path d="M3.6 7.2 H10.2 M3.6 9.2 H10.2" stroke="#cfcfcf" stroke-width="0.9"/></g></svg>
<svg style="left:599px;top:396px;" width="8" height="5"><g transform="translate(0.30 0.30)"><path d="M1 1 L3.7 3.6 L6.4 1" fill="none" stroke="#cfcfcf" stroke-width="1.1" stroke-linecap="round" stroke-linejoin="round"/></g></svg>
<svg style="left:611px;top:393px;" width="11" height="12"><g transform="translate(0.00 0.50)"><path d="M1.6 0.8 V4 M0.6 1.6 L1.6 0.8" stroke="#cfcfcf" stroke-width="0.9" fill="none"/><rect x="3.6" y="1.2" width="6.6" height="2.6" fill="#9a9a9a"/><path d="M0.4 7 C1.4 6 2.6 6.8 1.8 8 L0.4 9.8 H2.8" stroke="#cfcfcf" stroke-width="0.8" fill="none"/><path d="M3.6 7.2 H10.2 M3.6 9.2 H10.2" stroke="#cfcfcf" stroke-width="0.9"/></g></svg>
<svg style="left:625px;top:396px;" width="8" height="5"><g transform="translate(0.60 0.30)"><path d="M1 1 L3.7 3.6 L6.4 1" fill="none" stroke="#cfcfcf" stroke-width="1.1" stroke-linecap="round" stroke-linejoin="round"/></g></svg>
<svg style="left:582px;top:418px;" width="12" height="12"><g transform="translate(0.50 0.50)"><path d="M3.2 0 V11" stroke="#c4c4c4" stroke-width="0.7"/><path d="M4.2 1.0 H10.5" stroke="#c4c4c4" stroke-width="0.9"/><path d="M4.2 3.2 H10.5" stroke="#c4c4c4" stroke-width="0.9"/><path d="M4.2 5.4 H10.5" stroke="#c4c4c4" stroke-width="0.9"/><path d="M4.2 7.6000000000000005 H10.5" stroke="#c4c4c4" stroke-width="0.9"/><path d="M4.2 9.8 H10.5" stroke="#c4c4c4" stroke-width="0.9"/><path d="M-1.5 5.4 H2 M0.6 4 L2.2 5.4 L0.6 6.8" stroke="#c4c4c4" stroke-width="0.8" fill="none"/></g></svg>
<svg style="left:597px;top:417px" width="12" height="14"><rect x="0.00" y="0.60" width="11.50" height="13.00" fill="#4b4b4b"/></svg>
<svg style="left:609px;top:417px" width="58" height="14"><rect x="0.20" y="0.60" width="57.40" height="13.00" rx="1.00" fill="#454545"/></svg>
<svg style="left:599px;top:418px;" width="7" height="13"><g transform="translate(0.00 0.10)"><path d="M1 4 L3.5 1.6 L6 4 M1 8 L3.5 10.4 L6 8" fill="none" stroke="#cfcfcf" stroke-width="1.1" stroke-linecap="round" stroke-linejoin="round"/></g></svg>
<span class="t" style="left:611.11px;top:418.20px;font-size:9.7px;line-height:14px;color:#e6e6e6;font-weight:400;letter-spacing:0.517px;">0 pt</span>
<svg style="left:734px;top:418px;" width="12" height="12"><g transform="translate(0.50 0.50)"><path d="M7.8 0 V11" stroke="#c4c4c4" stroke-width="0.7"/><path d="M0.5 1.0 H6.6" stroke="#c4c4c4" stroke-width="0.9"/><path d="M0.5 3.2 H6.6" stroke="#c4c4c4" stroke-width="0.9"/><path d="M0.5 5.4 H6.6" stroke="#c4c4c4" stroke-width="0.9"/><path d="M0.5 7.6000000000000005 H6.6" stroke="#c4c4c4" stroke-width="0.9"/><path d="M0.5 9.8 H6.6" stroke="#c4c4c4" stroke-width="0.9"/><path d="M12.5 5.4 H9 M10.4 4 L8.8 5.4 L10.4 6.8" stroke="#c4c4c4" stroke-width="0.8" fill="none"/></g></svg>
<svg style="left:748px;top:417px" width="13" height="14"><rect x="0.90" y="0.60" width="11.50" height="13.00" fill="#4b4b4b"/></svg>
<svg style="left:761px;top:417px" width="58" height="14"><rect x="0.80" y="0.60" width="57.00" height="13.00" rx="1.00" fill="#454545"/></svg>
<svg style="left:750px;top:418px;" width="8" height="13"><g transform="translate(0.90 0.10)"><path d="M1 4 L3.5 1.6 L6 4 M1 8 L3.5 10.4 L6 8" fill="none" stroke="#cfcfcf" stroke-width="1.1" stroke-linecap="round" stroke-linejoin="round"/></g></svg>
<span class="t" style="left:763.71px;top:418.20px;font-size:9.7px;line-height:14px;color:#e6e6e6;font-weight:400;letter-spacing:0.517px;">0 pt</span>
<svg style="left:582px;top:437px;" width="12" height="12"><g transform="translate(0.50 0.10)"><path d="M-1.5 1.2 H2 M0.6 -0.2 L2.2 1.2 L0.6 2.6" stroke="#c4c4c4" stroke-width="0.8" fill="none"/><path d="M4.4 1.2 H10.5" stroke="#c4c4c4" stroke-width="0.9"/><path d="M2.6 3.6 H10.5 M2.6 5.8 H10.5 M2.6 8 H10.5 M2.6 10.2 H10.5" stroke="#9d9d9d" stroke-width="1.2"/></g></svg>
<svg style="left:597px;top:436px" width="12" height="13"><rect x="0.00" y="0.00" width="11.50" height="13.00" fill="#4b4b4b"/></svg>
<svg style="left:609px;top:436px" width="58" height="13"><rect x="0.20" y="0.00" width="57.40" height="13.00" rx="1.00" fill="#454545"/></svg>
<svg style="left:599px;top:436px;" width="7" height="13"><g transform="translate(0.00 0.50)"><path d="M1 4 L3.5 1.6 L6 4 M1 8 L3.5 10.4 L6 8" fill="none" stroke="#cfcfcf" stroke-width="1.1" stroke-linecap="round" stroke-linejoin="round"/></g></svg>
<span class="t" style="left:611.11px;top:436.60px;font-size:9.7px;line-height:14px;color:#e6e6e6;font-weight:400;letter-spacing:0.517px;">0 pt</span>
<svg style="left:582px;top:460px;" width="12" height="12"><g transform="translate(0.50 0.90)"><path d="M-1.5 1.6 H2 M0.6 0.2 L2.2 1.6 L0.6 3" stroke="#c4c4c4" stroke-width="0.8" fill="none"/><rect x="3.6" y="0.5" width="6.6" height="3.2" fill="none" stroke="#c4c4c4" stroke-width="0.8"/><path d="M3.2 6.2 H10.5 M3.2 8.4 H10.5 M3.2 10.6 H8.5" stroke="#c4c4c4" stroke-width="0.9"/></g></svg>
<svg style="left:597px;top:459px" width="12" height="14"><rect x="0.00" y="0.80" width="11.50" height="13.00" fill="#4b4b4b"/></svg>
<svg style="left:609px;top:459px" width="58" height="14"><rect x="0.20" y="0.80" width="57.40" height="13.00" rx="1.00" fill="#454545"/></svg>
<svg style="left:599px;top:460px;" width="7" height="13"><g transform="translate(0.00 0.30)"><path d="M1 4 L3.5 1.6 L6 4 M1 8 L3.5 10.4 L6 8" fill="none" stroke="#cfcfcf" stroke-width="1.1" stroke-linecap="round" stroke-linejoin="round"/></g></svg>
<span class="t" style="left:611.11px;top:460.40px;font-size:9.7px;line-height:14px;color:#e6e6e6;font-weight:400;letter-spacing:0.517px;">0 pt</span>
<svg style="left:734px;top:460px;" width="12" height="12"><g transform="translate(0.50 0.90)"><path d="M3.2 0.6 H10.5 M3.2 2.8 H10.5 M5.2 5 H10.5" stroke="#c4c4c4" stroke-width="0.9"/><rect x="3.6" y="7.2" width="6.6" height="3.2" fill="none" stroke="#c4c4c4" stroke-width="0.8"/><path d="M-1.5 9 H2 M0.6 7.6 L2.2 9 L0.6 10.4" stroke="#c4c4c4" stroke-width="0.8" fill="none"/></g></svg>
<svg style="left:748px;top:459px" width="13" height="14"><rect x="0.90" y="0.80" width="11.50" height="13.00" fill="#4b4b4b"/></svg>
<svg style="left:761px;top:459px" width="58" height="14"><rect x="0.80" y="0.80" width="57.00" height="13.00" rx="1.00" fill="#454545"/></svg>
<svg style="left:750px;top:460px;" width="8" height="13"><g transform="translate(0.90 0.30)"><path d="M1 4 L3.5 1.6 L6 4 M1 8 L3.5 10.4 L6 8" fill="none" stroke="#cfcfcf" stroke-width="1.1" stroke-linecap="round" stroke-linejoin="round"/></g></svg>
<span class="t" style="left:763.71px;top:460.40px;font-size:9.7px;line-height:14px;color:#e6e6e6;font-weight:400;letter-spacing:0.517px;">0 pt</span>
<span class="t" style="left:580.57px;top:483.00px;font-size:8.7px;line-height:14px;color:#cfcfcf;font-weight:400;letter-spacing:0.144px;">禁則処理 :</span>
<svg style="left:623px;top:483px" width="196" height="13"><rect x="0.00" y="0.20" width="196.00" height="12.80" rx="1.00" fill="#454545"/></svg>
<span class="t" style="left:626.37px;top:483.00px;font-size:8.7px;line-height:14px;color:#e4e4e4;font-weight:400;letter-spacing:0.230px;">強い禁則</span>
<svg style="left:809px;top:487px;" width="8" height="6"><g transform="translate(0.30 0.90)"><path d="M1 1 L3.7 3.6 L6.4 1" fill="none" stroke="#dddddd" stroke-width="1.1" stroke-linecap="round" stroke-linejoin="round"/></g></svg>
<span class="t" style="left:580.57px;top:501.60px;font-size:8.7px;line-height:14px;color:#cfcfcf;font-weight:400;letter-spacing:0.178px;">文字組み :</span>
<svg style="left:623px;top:501px" width="196" height="14"><rect x="0.00" y="0.80" width="196.00" height="12.80" rx="1.00" fill="#454545"/></svg>
<span class="t" style="left:626.37px;top:501.60px;font-size:8.7px;line-height:14px;color:#e4e4e4;font-weight:400;letter-spacing:-0.119px;">行末約物半角</span>
<svg style="left:809px;top:506px;" width="8" height="6"><g transform="translate(0.30 0.50)"><path d="M1 1 L3.7 3.6 L6.4 1" fill="none" stroke="#dddddd" stroke-width="1.1" stroke-linecap="round" stroke-linejoin="round"/></g></svg>
<svg style="left:581px;top:524px" width="9" height="10"><rect x="1.00" y="1.30" width="7.40" height="7.40" rx="1.00" fill="none" stroke="#bdbdbd" stroke-width="1.0"/></svg>
<span class="t" style="left:592.86px;top:522.40px;font-size:8.8px;line-height:14px;color:#dcdcdc;font-weight:400;letter-spacing:0.842px;">ハイフネーション</span>
<svg style="left:825px;top:6px" width="199" height="20"><rect x="0.50" y="0.00" width="198.50" height="20.00" fill="#424242"/></svg>
<svg style="left:825px;top:6px" width="52" height="21"><rect x="0.50" y="0.00" width="51.50" height="21.00" fill="#535353"/></svg>
<span class="t" style="left:831.88px;top:8.50px;font-size:8.4px;line-height:14px;color:#ededed;font-weight:700;letter-spacing:0.183px;">スウォッチ</span>
<svg style="left:1012px;top:13px;" width="8" height="8"><g transform="translate(0.00 0.90)"><path d="M0 0.6 H7.5 M0 2.7 H7.5 M0 4.8 H7.5" stroke="#9a9a9a" stroke-width="1.1"/></g></svg>
<svg style="left:825px;top:26px" width="199" height="337"><rect x="0.50" y="0.00" width="198.50" height="337.00" fill="#535353"/></svg>
<svg style="left:836px;top:37px;" width="15" height="14"><g transform="translate(0.80 0.50)"><rect x="0" y="0" width="13.4" height="13.4" fill="#fff"/><rect x="3.7" y="3.7" width="6" height="6" fill="#3a3a3a"/><path d="M-0.3 13.7 L13.7 -0.3" stroke="#e0202a" stroke-width="1.6"/></g></svg>
<svg style="left:829px;top:30px" width="15" height="14"><rect x="1.30" y="0.70" width="12.40" height="12.40" fill="#ff2e8a" stroke="#f7a6cb" stroke-width="1.0"/></svg>
<svg style="left:963px;top:33px" width="19" height="19"><rect x="1.20" y="0.80" width="17.20" height="17.00" rx="0.50" fill="none" stroke="#6a6a6a" stroke-width="1.0"/></svg>
<svg style="left:966px;top:36px;" width="13" height="13"><g transform="translate(0.80 0.30)"><g fill="#d0d0d0"><rect x="0.8" y="0.8" width="2.6" height="2.6"/><rect x="8.6" y="0.8" width="2.6" height="2.6"/><rect x="4.7" y="4.7" width="2.6" height="2.6"/><rect x="0.8" y="8.6" width="2.6" height="2.6"/><rect x="8.6" y="8.6" width="2.6" height="2.6"/></g></g></svg>
<svg style="left:989px;top:37px;" width="11" height="11"><g transform="translate(0.50 0.50)"><path d="M0.5 1 H9 M0.5 3.6 H9 M0.5 6.2 H9 M0.5 8.8 H9" stroke="#c8c8c8" stroke-width="1.2"/></g></svg>
<svg style="left:1003px;top:33px" width="17" height="18"><rect x="0.50" y="0.80" width="16.00" height="17.20" fill="#2c2c2c"/></svg>
<svg style="left:1006px;top:37px;" width="11" height="11"><g transform="translate(0.50 0.20)"><g fill="#f0f0f0"><rect x="0.3" y="0.3" width="2.7" height="2.7"/><rect x="0.3" y="3.5999999999999996" width="2.7" height="2.7"/><rect x="0.3" y="6.8999999999999995" width="2.7" height="2.7"/><rect x="3.5999999999999996" y="0.3" width="2.7" height="2.7"/><rect x="3.5999999999999996" y="3.5999999999999996" width="2.7" height="2.7"/><rect x="3.5999999999999996" y="6.8999999999999995" width="2.7" height="2.7"/><rect x="6.8999999999999995" y="0.3" width="2.7" height="2.7"/><rect x="6.8999999999999995" y="3.5999999999999996" width="2.7" height="2.7"/><rect x="6.8999999999999995" y="6.8999999999999995" width="2.7" height="2.7"/></g></g></svg>
<svg style="left:829px;top:56px;" width="11" height="10"><g transform="translate(0.80 0.25)"><rect width="9.3" height="9.3" fill="#fff"/><path d="M0.3 9 L9 0.3" stroke="#e0202a" stroke-width="1.4"/></g></svg>
<svg style="left:839px;top:56px;" width="11" height="10"><g transform="translate(0.73 0.25)"><rect width="9.3" height="9.3" fill="#e9e9e9"/><g fill="none" stroke="#8a8a8a" stroke-width="0.6"><rect x="1" y="1" width="2.8" height="2.8"/><rect x="5.5" y="1" width="2.8" height="2.8"/><rect x="1" y="5.5" width="2.8" height="2.8"/><rect x="5.5" y="5.5" width="2.8" height="2.8"/></g></g></svg>
<svg style="left:849px;top:56px" width="10" height="10"><rect x="0.66" y="0.25" width="9.30" height="9.30" fill="#ffffff"/></svg>
<svg style="left:859px;top:56px" width="10" height="10"><rect x="0.59" y="0.25" width="9.30" height="9.30" fill="#000000"/></svg>
<svg style="left:869px;top:56px" width="10" height="10"><rect x="0.52" y="0.25" width="9.30" height="9.30" fill="#ff0000"/></svg>
<svg style="left:879px;top:56px" width="10" height="10"><rect x="0.45" y="0.25" width="9.30" height="9.30" fill="#fff100"/></svg>
<svg style="left:889px;top:56px" width="10" height="10"><rect x="0.38" y="0.25" width="9.30" height="9.30" fill="#00a03c"/></svg>
<svg style="left:899px;top:56px" width="10" height="10"><rect x="0.31" y="0.25" width="9.30" height="9.30" fill="#00a0e9"/></svg>
<svg style="left:909px;top:56px" width="10" height="10"><rect x="0.24" y="0.25" width="9.30" height="9.30" fill="#1d2088"/></svg>
<svg style="left:919px;top:56px" width="10" height="10"><rect x="0.17" y="0.25" width="9.30" height="9.30" fill="#ff0a8c"/></svg>
<svg style="left:929px;top:56px" width="10" height="10"><rect x="0.10" y="0.25" width="9.30" height="9.30" fill="#e60012"/></svg>
<svg style="left:939px;top:56px" width="10" height="10"><rect x="0.03" y="0.25" width="9.30" height="9.30" fill="#ff1414"/></svg>
<svg style="left:948px;top:56px" width="11" height="10"><rect x="0.96" y="0.25" width="9.30" height="9.30" fill="#ff4d0a"/></svg>
<svg style="left:958px;top:56px" width="11" height="10"><rect x="0.89" y="0.25" width="9.30" height="9.30" fill="#ff9500"/></svg>
<svg style="left:968px;top:56px" width="11" height="10"><rect x="0.82" y="0.25" width="9.30" height="9.30" fill="#ffb400"/></svg>
<svg style="left:978px;top:56px" width="11" height="10"><rect x="0.75" y="0.25" width="9.30" height="9.30" fill="#fff000"/></svg>
<svg style="left:988px;top:56px" width="10" height="10"><rect x="0.68" y="0.25" width="9.30" height="9.30" fill="#d7df00"/></svg>
<svg style="left:998px;top:56px" width="10" height="10"><rect x="0.61" y="0.25" width="9.30" height="9.30" fill="#80c31c"/></svg>
<svg style="left:829px;top:66px" width="11" height="10"><rect x="0.80" y="0.60" width="9.30" height="9.20" fill="#00a83c"/></svg>
<svg style="left:839px;top:66px" width="11" height="10"><rect x="0.73" y="0.60" width="9.30" height="9.20" fill="#009a3a"/></svg>
<svg style="left:849px;top:66px" width="10" height="10"><rect x="0.66" y="0.60" width="9.30" height="9.20" fill="#007a3a"/></svg>
<svg style="left:859px;top:66px" width="10" height="10"><rect x="0.59" y="0.60" width="9.30" height="9.20" fill="#00b26a"/></svg>
<svg style="left:869px;top:66px" width="10" height="10"><rect x="0.52" y="0.60" width="9.30" height="9.20" fill="#00a99d"/></svg>
<svg style="left:879px;top:66px" width="10" height="10"><rect x="0.45" y="0.60" width="9.30" height="9.20" fill="#00a0e9"/></svg>
<svg style="left:889px;top:66px" width="10" height="10"><rect x="0.38" y="0.60" width="9.30" height="9.20" fill="#0075c2"/></svg>
<svg style="left:899px;top:66px" width="10" height="10"><rect x="0.31" y="0.60" width="9.30" height="9.20" fill="#0b2f9a"/></svg>
<svg style="left:909px;top:66px" width="10" height="10"><rect x="0.24" y="0.60" width="9.30" height="9.20" fill="#171c77"/></svg>
<svg style="left:919px;top:66px" width="10" height="10"><rect x="0.17" y="0.60" width="9.30" height="9.20" fill="#601986"/></svg>
<svg style="left:929px;top:66px" width="10" height="10"><rect x="0.10" y="0.60" width="9.30" height="9.20" fill="#920783"/></svg>
<svg style="left:939px;top:66px" width="10" height="10"><rect x="0.03" y="0.60" width="9.30" height="9.20" fill="#be0a6e"/></svg>
<svg style="left:948px;top:66px" width="11" height="10"><rect x="0.96" y="0.60" width="9.30" height="9.20" fill="#e5005a"/></svg>
<svg style="left:958px;top:66px" width="11" height="10"><rect x="0.89" y="0.60" width="9.30" height="9.20" fill="#f0128c"/></svg>
<svg style="left:968px;top:66px" width="11" height="10"><rect x="0.82" y="0.60" width="9.30" height="9.20" fill="#c8a98c"/></svg>
<svg style="left:978px;top:66px" width="11" height="10"><rect x="0.75" y="0.60" width="9.30" height="9.20" fill="#a68773"/></svg>
<svg style="left:988px;top:66px" width="10" height="10"><rect x="0.68" y="0.60" width="9.30" height="9.20" fill="#8a6e54"/></svg>
<svg style="left:998px;top:66px" width="10" height="10"><rect x="0.61" y="0.60" width="9.30" height="9.20" fill="#6e4e3c"/></svg>
<svg style="left:829px;top:76px" width="11" height="10"><rect x="0.80" y="0.50" width="9.30" height="9.30" fill="#cb9a5a"/></svg>
<svg style="left:839px;top:76px" width="11" height="10"><rect x="0.73" y="0.50" width="9.30" height="9.30" fill="#c48a45"/></svg>
<svg style="left:849px;top:76px" width="10" height="10"><rect x="0.66" y="0.50" width="9.30" height="9.30" fill="#b26a2a"/></svg>
<svg style="left:859px;top:76px" width="10" height="10"><rect x="0.59" y="0.50" width="9.30" height="9.30" fill="#a55a1a"/></svg>
<svg style="left:829px;top:76px;" width="170" height="10"><g transform="translate(0.80 0.50)"><defs><linearGradient id="g_bw"><stop offset="0" stop-color="#fff"/><stop offset="0.45" stop-color="#cfcfcf"/><stop offset="1" stop-color="#1a1a1a"/></linearGradient><linearGradient id="g_yo"><stop offset="0" stop-color="#ffe800"/><stop offset="0.5" stop-color="#ffb400"/><stop offset="1" stop-color="#ff6a00"/></linearGradient><linearGradient id="g_bl"><stop offset="0" stop-color="#1f86dc"/><stop offset="1" stop-color="#cfe6f6"/></linearGradient><linearGradient id="g_bp"><stop offset="0" stop-color="#2fa8e4"/><stop offset="1" stop-color="#b07ac6"/></linearGradient><radialGradient id="g_gr"><stop offset="0" stop-color="#5cc41c"/><stop offset="0.55" stop-color="#46b010"/><stop offset="1" stop-color="#c8eeb0"/></radialGradient></defs><rect x="39.72" y="0" width="9.3" height="9.3" fill="url(#g_bw)"/><rect x="49.65" y="0" width="9.3" height="9.3" fill="url(#g_yo)"/><rect x="59.58" y="0" width="9.3" height="9.3" fill="url(#g_bl)"/><rect x="64.78" y="1.00" width="2" height="2" fill="#ffffff" opacity="0.35"/><rect x="66.78" y="3.00" width="2" height="2" fill="#ffffff" opacity="0.35"/><rect x="64.78" y="5.00" width="2" height="2" fill="#ffffff" opacity="0.35"/><rect x="66.78" y="7.00" width="2" height="2" fill="#ffffff" opacity="0.35"/><rect x="69.51" y="0" width="9.3" height="9.3" fill="#0a0a0a"/><circle cx="74.16" cy="4.65" r="3.3" fill="#ececec"/><rect x="79.44" y="0" width="9.3" height="9.3" fill="#e6f6d8"/><rect x="80.64" y="1.2" width="6.9" height="6.9" rx="2" fill="url(#g_gr)"/><path d="M79.44 0 l2.4 0 l-2.4 2.4z M88.74 0 l-2.4 0 l2.4 2.4z M79.44 9.3 l2.4 0 l-2.4 -2.4z M88.74 9.3 l-2.4 0 l2.4 -2.4z" fill="#52b818"/><rect x="89.37" y="0" width="9.3" height="9.3" fill="#d9b48c"/><circle cx="90.77" cy="1.50" r="1" fill="#b9814f"/><circle cx="93.47" cy="5.20" r="1" fill="#b9814f"/><circle cx="96.17" cy="8.90" r="1" fill="#b9814f"/><circle cx="90.77" cy="5.10" r="1" fill="#b9814f"/><circle cx="93.47" cy="8.80" r="1" fill="#b9814f"/><circle cx="96.17" cy="5.00" r="1" fill="#b9814f"/><circle cx="90.77" cy="8.70" r="1" fill="#b9814f"/><circle cx="93.47" cy="4.90" r="1" fill="#b9814f"/><circle cx="96.17" cy="8.60" r="1" fill="#b9814f"/><rect x="99.3" y="0" width="9.3" height="9.3" fill="#ffffff"/><circle cx="103.95" cy="4.65" r="1.9" fill="#000"/><rect x="109.23" y="0" width="9.3" height="9.3" fill="#ffffff"/><path d="M109.83 4.65 h8.100000000000001" stroke="#58c4c4" stroke-width="1.2" stroke-dasharray="1.8 1.2"/><rect x="119.16" y="0" width="9.3" height="9.3" fill="#3f4ba6"/><path d="M121.56 0 h4.6 l-4.2 4.4 h-2.8z M128.46 3.2 v3.4 l-2.8 2.7 h-3z" fill="#f2e25c"/><rect x="129.09" y="0" width="9.3" height="9.3" fill="#fbe3ee"/><path d="M131.09 0.6 l5 8 M135.49 0.6 l-4.2 8" stroke="#f0bcd4" stroke-width="1"/><rect x="139.02" y="0" width="9.3" height="9.3" fill="#0a9a3c"/><path d="M139.42 2.6 L141.62 0.4 M142.22 5.6 L145.02 2.8 M145.22 8.8 L147.82 6.2" stroke="#ffffff" stroke-width="1.5"/><rect x="148.95" y="0" width="9.3" height="9.3" fill="url(#g_bp)"/><rect x="158.88" y="0" width="9.3" height="9.3" fill="#ffffff"/><path d="M163.48 1 L166.68 8.6" stroke="#e0306a" stroke-width="1.5"/></g></svg>
<svg style="left:830px;top:87px;" width="9" height="10"><g transform="translate(0.00 0.80)"><path d="M0.6 2 H3.6 L4.4 3 H8.4 V8 H0.6z" fill="#c2c2c2"/><path d="M0.6 3.6 H8.4" stroke="#6e6e6e" stroke-width="0.5"/></g></svg>
<svg style="left:839px;top:87px" width="11" height="10"><rect x="0.73" y="0.60" width="9.30" height="9.40" fill="#000000"/></svg>
<svg style="left:849px;top:87px" width="10" height="10"><rect x="0.66" y="0.60" width="9.30" height="9.40" fill="#3c3c3c"/></svg>
<svg style="left:859px;top:87px" width="10" height="10"><rect x="0.59" y="0.60" width="9.30" height="9.40" fill="#5c5c5c"/></svg>
<svg style="left:869px;top:87px" width="10" height="10"><rect x="0.52" y="0.60" width="9.30" height="9.40" fill="#787878"/></svg>
<svg style="left:879px;top:87px" width="10" height="10"><rect x="0.45" y="0.60" width="9.30" height="9.40" fill="#909090"/></svg>
<svg style="left:889px;top:87px" width="10" height="10"><rect x="0.38" y="0.60" width="9.30" height="9.40" fill="#a8a8a8"/></svg>
<svg style="left:899px;top:87px" width="10" height="10"><rect x="0.31" y="0.60" width="9.30" height="9.40" fill="#bebebe"/></svg>
<svg style="left:909px;top:87px" width="10" height="10"><rect x="0.24" y="0.60" width="9.30" height="9.40" fill="#d2d2d2"/></svg>
<svg style="left:919px;top:87px" width="10" height="10"><rect x="0.17" y="0.60" width="9.30" height="9.40" fill="#e2e2e2"/></svg>
<svg style="left:929px;top:87px" width="10" height="10"><rect x="0.10" y="0.60" width="9.30" height="9.40" fill="#f0f0f0"/></svg>
<svg style="left:939px;top:87px" width="10" height="10"><rect x="0.03" y="0.60" width="9.30" height="9.40" fill="#f8f8f8"/></svg>
<svg style="left:830px;top:99px;" width="9" height="9"><g transform="translate(0.00 0.00)"><path d="M0.6 2 H3.6 L4.4 3 H8.4 V8 H0.6z" fill="#c2c2c2"/><path d="M0.6 3.6 H8.4" stroke="#6e6e6e" stroke-width="0.5"/></g></svg>
<svg style="left:839px;top:98px" width="11" height="11"><rect x="0.73" y="0.80" width="9.30" height="9.40" fill="#ff0000"/></svg>
<svg style="left:849px;top:98px" width="10" height="11"><rect x="0.66" y="0.80" width="9.30" height="9.40" fill="#ff5f00"/></svg>
<svg style="left:859px;top:98px" width="10" height="11"><rect x="0.59" y="0.80" width="9.30" height="9.40" fill="#ffe600"/></svg>
<svg style="left:869px;top:98px" width="10" height="11"><rect x="0.52" y="0.80" width="9.30" height="9.40" fill="#00a03c"/></svg>
<svg style="left:879px;top:98px" width="10" height="11"><rect x="0.45" y="0.80" width="9.30" height="9.40" fill="#0b2f9a"/></svg>
<svg style="left:889px;top:98px" width="10" height="11"><rect x="0.38" y="0.80" width="9.30" height="9.40" fill="#8a1e96"/></svg>
<svg style="left:830px;top:110px;" width="9" height="10"><g transform="translate(0.00 0.50)"><path d="M0.6 2 H3.6 L4.4 3 H8.4 V8 H0.6z" fill="#c2c2c2"/><path d="M0.6 3.6 H8.4" stroke="#6e6e6e" stroke-width="0.5"/></g></svg>
<svg style="left:839px;top:110px" width="11" height="10"><rect x="0.73" y="0.10" width="9.30" height="9.40" fill="#5cc48a"/></svg>
<svg style="left:849px;top:110px" width="10" height="10"><rect x="0.66" y="0.10" width="9.30" height="9.40" fill="#54b59e"/></svg>
<svg style="left:859px;top:110px" width="10" height="10"><rect x="0.59" y="0.10" width="9.30" height="9.40" fill="#4ea3aa"/></svg>
<svg style="left:869px;top:110px" width="10" height="10"><rect x="0.52" y="0.10" width="9.30" height="9.40" fill="#4a8fbc"/></svg>
<svg style="left:879px;top:110px" width="10" height="10"><rect x="0.45" y="0.10" width="9.30" height="9.40" fill="#4d75c4"/></svg>
<svg style="left:889px;top:110px" width="10" height="10"><rect x="0.38" y="0.10" width="9.30" height="9.40" fill="#8a68b8"/></svg>
<svg style="left:899px;top:110px" width="10" height="10"><rect x="0.31" y="0.10" width="9.30" height="9.40" fill="#b55fae"/></svg>
<svg style="left:909px;top:110px" width="10" height="10"><rect x="0.24" y="0.10" width="9.30" height="9.40" fill="#dc4f96"/></svg>
<div style="left:919.2px;top:110.1px;width:9.9px;height:9.8px;background:#ff2d84;border:0.9px solid #f3d6e4;box-shadow:inset 0 0 0 1px #5a1238"></div>
<svg style="left:828px;top:349px" width="193" height="1"><rect x="0.50" y="0.20" width="192.00" height="0.80" fill="#484848"/></svg>
<svg style="left:832px;top:351px;" width="13" height="10"><g transform="translate(0.50 0.50)"><path d="M0.8 8.4 V3.6 C0.8 1 4.2 1 4.2 3.6 V8.4 M5.4 8.4 V3 M7 8.4 V3.4" stroke="#c9c9c9" stroke-width="1.2" fill="none"/><rect x="9.4" y="7.6" width="1" height="1" fill="#c9c9c9"/></g></svg>
<svg style="left:852px;top:351px;" width="10" height="11"><g transform="translate(0.00 0.20)"><rect x="2.6" y="1" width="6.4" height="7.6" fill="none" stroke="#c9c9c9" stroke-width="1"/><path d="M0 5.2 H5 M3.4 3.6 L5.2 5.2 L3.4 6.8" stroke="#c9c9c9" stroke-width="0.9" fill="none"/><rect x="4.6" y="0.4" width="3.4" height="2.4" fill="#c9c9c9"/></g></svg>
<svg style="left:920px;top:351px;" width="12" height="10"><g transform="translate(0.50 0.50)"><rect x="0.6" y="0.6" width="7.4" height="7.4" fill="#a4a4a4"/><path d="M0.6 4.3 H8 M4.3 0.6 V8" stroke="#6a6a6a" stroke-width="0.6"/><rect x="9.4" y="7.4" width="1" height="1" fill="#c9c9c9"/></g></svg>
<svg style="left:940px;top:351px;" width="9" height="10"><g transform="translate(0.00 0.50)"><rect x="0.6" y="0.6" width="7.8" height="7.8" rx="1" fill="none" stroke="#a8a8a8" stroke-width="0.9"/><rect x="2" y="3" width="5" height="4" fill="#8e8e8e"/><path d="M2 2 H7" stroke="#a8a8a8" stroke-width="0.6"/></g></svg>
<svg style="left:958px;top:351px;" width="10" height="10"><g transform="translate(0.00 0.30)"><path d="M0.6 1 H3.8 L4.8 2.2 H9.4 V8.4 H0.6z" fill="#c9c9c9"/></g></svg>
<svg style="left:978px;top:351px;" width="9" height="10"><g transform="translate(0.00 0.50)"><rect x="0.6" y="0.6" width="7.6" height="7.6" rx="0.8" fill="none" stroke="#c9c9c9" stroke-width="1"/><path d="M4.4 2.6 V6.2 M2.6 4.4 H6.2" stroke="#c9c9c9" stroke-width="0.9"/></g></svg>
<svg style="left:996px;top:351px;" width="9" height="10"><g transform="translate(0.20 0.00)"><path d="M0.6 2.2 H7.4 M2.8 2 V0.9 H5.2 V2" stroke="#9e9e9e" stroke-width="0.9" fill="none"/><rect x="1.3" y="3" width="5.4" height="6.4" rx="0.6" fill="#8c8c8c"/></g></svg>
<svg style="left:825px;top:362px" width="199" height="2"><rect x="0.50" y="0.80" width="198.50" height="1.20" fill="#3b3b3b"/></svg>
<svg style="left:825px;top:364px" width="199" height="21"><rect x="0.50" y="0.00" width="198.50" height="21.00" fill="#424242"/></svg>
<svg style="left:880px;top:364px" width="70" height="22"><rect x="0.00" y="0.00" width="70.00" height="22.00" fill="#535353"/></svg>
<span class="t" style="left:831.58px;top:367.20px;font-size:8.4px;line-height:14px;color:#b2b2b2;font-weight:400;letter-spacing:0.276px;">カラー</span>
<span class="t" style="left:861.98px;top:367.20px;font-size:8.4px;line-height:14px;color:#b2b2b2;font-weight:400;letter-spacing:-0.273px;">透明</span>
<span class="t" style="left:889.38px;top:367.20px;font-size:8.4px;line-height:14px;color:#ededed;font-weight:700;letter-spacing:0.223px;">グラデーション</span>
<span class="t" style="left:956.28px;top:367.20px;font-size:8.4px;line-height:14px;color:#b2b2b2;font-weight:400;letter-spacing:-0.019px;">カラーガイ</span>
<svg style="left:1012px;top:372px;" width="9" height="8"><g transform="translate(0.50 0.40)"><path d="M0 0.6 H7.5 M0 2.7 H7.5 M0 4.8 H7.5" stroke="#9a9a9a" stroke-width="1.1"/></g></svg>
<svg style="left:857px;top:366px" width="2" height="18"><rect x="0.50" y="0.00" width="1.00" height="18.00" fill="#3d3d3d"/></svg>
<svg style="left:999px;top:366px" width="2" height="18"><rect x="0.50" y="0.00" width="1.00" height="18.00" fill="#3d3d3d"/></svg>
<svg style="left:882px;top:370px;" width="6" height="9"><g transform="translate(0.00 0.00)"><path d="M1.3 3.6 L3 1.8 L4.7 3.6 M1.3 5.6 L3 7.4 L4.7 5.6" fill="none" stroke="#8f8f8f" stroke-width="0.8"/></g></svg>
<svg style="left:825px;top:385px" width="199" height="152"><rect x="0.50" y="0.00" width="198.50" height="152.00" fill="#535353"/></svg>
<div style="left:829.6px;top:389px;width:21.8px;height:22px;background:linear-gradient(90deg,#f4f4f4 0%,#9c9c9c 55%,#2a2a2a 92%,#1a1a1a 100%);border-right:1.4px solid #1c1c1c"></div>
<svg style="left:853px;top:398px;" width="6" height="5"><g transform="translate(0.50 0.40)"><path d="M0.6 0.8 H4.2 L2.4 3z" fill="#d0d0d0"/></g></svg>
<span class="t" style="left:872.57px;top:390.40px;font-size:8.6px;line-height:14px;color:#e0e0e0;font-weight:500;letter-spacing:0.397px;">種類 :</span>
<div style="left:900px;top:391.2px;width:12.2px;height:12px;background:linear-gradient(90deg,#2e2e2e,#d0d0d0);border:1px solid #c4c4c4"></div>
<div style="left:917.8px;top:391.2px;width:12.2px;height:12px;background:radial-gradient(circle,#e6e6e6 0,#4a4a4a 75%);border:1px solid #a0a0a0"></div>
<div style="left:935.5px;top:391.2px;width:12.2px;height:12px;background:linear-gradient(160deg,#3a3a3a 10%,#e2e2e2 50%,#3a3a3a 90%);border:1px solid #a0a0a0"></div>
<svg style="left:836px;top:423px;" width="15" height="14"><g transform="translate(0.80 0.10)"><rect x="0" y="0" width="13.4" height="13.4" fill="#fff"/><rect x="3.7" y="3.7" width="6" height="6" fill="#3a3a3a"/><path d="M-0.3 13.7 L13.7 -0.3" stroke="#e0202a" stroke-width="1.6"/></g></svg>
<svg style="left:829px;top:415px" width="15" height="15"><rect x="1.30" y="1.30" width="12.40" height="12.40" fill="#ff2e8a" stroke="#f7a6cb" stroke-width="1.0"/></svg>
<span class="t" style="left:881.67px;top:411.20px;font-size:8.6px;line-height:14px;color:#7b7b7b;font-weight:500;letter-spacing:0.354px;">線 :</span>
<svg style="left:899px;top:411px" width="13" height="13"><rect x="1.10" y="1.30" width="11.40" height="10.80" fill="none" stroke="#626262" stroke-width="1.0"/></svg>
<svg style="left:901px;top:413px;" width="9" height="9"><g transform="translate(0.80 0.80)"><path d="M1 7.4 V2.4 Q1 1 2.4 1 H7" fill="none" stroke="#777" stroke-width="2"/></g></svg>
<svg style="left:916px;top:411px" width="13" height="13"><rect x="0.90" y="1.30" width="11.40" height="10.80" fill="none" stroke="#626262" stroke-width="1.0"/></svg>
<svg style="left:918px;top:413px;" width="9" height="9"><g transform="translate(0.60 0.80)"><path d="M1 7.4 V2.4 Q1 1 2.4 1 H7" fill="none" stroke="#777" stroke-width="2"/></g></svg>
<svg style="left:933px;top:411px" width="13" height="13"><rect x="0.70" y="1.30" width="11.40" height="10.80" fill="none" stroke="#626262" stroke-width="1.0"/></svg>
<svg style="left:935px;top:413px;" width="9" height="9"><g transform="translate(0.40 0.80)"><path d="M1 7.4 V2.4 Q1 1 2.4 1 H7" fill="none" stroke="#777" stroke-width="2"/></g></svg>
<svg style="left:883px;top:430px;" width="12" height="10"><g transform="translate(0.60 0.60)"><path d="M0.6 8 H10 M0.6 8 L8 1.2 M5.4 8 A4.6 4.6 0 0 0 4.2 4.8" fill="none" stroke="#8c8c8c" stroke-width="0.9"/></g></svg>
<svg style="left:897px;top:428px" width="60" height="16"><rect x="0.60" y="0.40" width="58.80" height="15.20" rx="1.50" fill="#575757"/></svg>
<svg style="left:945px;top:433px;" width="8" height="5"><g transform="translate(0.60 0.50)"><path d="M1 1 L3.4 3.2 L5.8 1" fill="none" stroke="#6e6e6e" stroke-width="0.9" stroke-linecap="round" stroke-linejoin="round"/></g></svg>
<svg style="left:883px;top:448px;" width="12" height="12"><g transform="translate(0.00 0.00)"><ellipse cx="7.4" cy="5.6" rx="3.8" ry="2.6" fill="none" stroke="#909090" stroke-width="0.9"/><path d="M1.4 1 V10.4 M0.2 2.4 L1.4 0.8 L2.6 2.4 M0.2 9 L1.4 10.6 L2.6 9 M3.6 10.6 H11.2" fill="none" stroke="#909090" stroke-width="0.8"/></g></svg>
<svg style="left:897px;top:447px" width="60" height="15"><rect x="0.60" y="0.00" width="58.80" height="14.60" rx="1.50" fill="#575757"/></svg>
<svg style="left:945px;top:452px;" width="8" height="5"><g transform="translate(0.60 0.10)"><path d="M1 1 L3.4 3.2 L5.8 1" fill="none" stroke="#6e6e6e" stroke-width="0.9" stroke-linecap="round" stroke-linejoin="round"/></g></svg>
<svg style="left:833px;top:444px;" width="11" height="11"><g transform="translate(0.00 0.50)"><g fill="none" stroke="#7a7a7a" stroke-width="0.7"><rect x="1" y="0.8" width="3.4" height="3"/><rect x="5.6" y="5.6" width="3.4" height="3"/><path d="M5.4 2.2 H9.4 M8.2 1 L9.6 2.2 L8.2 3.4 M4.6 7.2 H0.6 M1.8 6 L0.4 7.2 L1.8 8.4"/></g></g></svg>
<div style="left:836.4px;top:476.8px;width:160.4px;height:10.6px;background:linear-gradient(90deg,#ffffff 0%,#e0e0e0 20%,#b4b4b4 45%,#8a8a8a 65%,#585858 82%,#181818 95%,#000 100%);"></div>
<svg style="left:1007px;top:479px;" width="9" height="10"><g transform="translate(0.60 0.50)"><path d="M0.6 2.2 H7.4 M2.8 2 V0.9 H5.2 V2" stroke="#6c6c6c" stroke-width="0.9" fill="none"/><rect x="1.3" y="3" width="5.4" height="5.6" rx="0.6" fill="none" stroke="#6c6c6c" stroke-width="0.9"/></g></svg>
<span class="t" style="left:855.67px;top:502.80px;font-size:8.6px;line-height:14px;color:#7b7b7b;font-weight:500;letter-spacing:0.201px;">不透明度 :</span>
<svg style="left:897px;top:502px" width="60" height="15"><rect x="0.60" y="0.40" width="58.80" height="14.40" rx="1.50" fill="#575757"/></svg>
<svg style="left:945px;top:507px;" width="8" height="5"><g transform="translate(0.60 0.30)"><path d="M1 1 L3.4 3.2 L5.8 1" fill="none" stroke="#6e6e6e" stroke-width="0.9" stroke-linecap="round" stroke-linejoin="round"/></g></svg>
<span class="t" style="left:872.97px;top:520.80px;font-size:8.6px;line-height:14px;color:#7b7b7b;font-weight:500;letter-spacing:0.283px;">位置 :</span>
<svg style="left:897px;top:520px" width="60" height="16"><rect x="0.60" y="0.60" width="58.80" height="14.60" rx="1.50" fill="#575757"/></svg>
<svg style="left:945px;top:525px;" width="8" height="5"><g transform="translate(0.60 0.70)"><path d="M1 1 L3.4 3.2 L5.8 1" fill="none" stroke="#6e6e6e" stroke-width="0.9" stroke-linecap="round" stroke-linejoin="round"/></g></svg>
<svg style="left:832px;top:510px;" width="14" height="15"><g transform="translate(0.50 0.50)"><g transform="rotate(45 6.5 7)"><rect x="5" y="0" width="3" height="4" rx="1" fill="#7a7a7a"/><rect x="4" y="3.6" width="5" height="1.4" fill="#7a7a7a"/><path d="M5.2 5.2 h2.6 v5.6 l-1.3 2.4 l-1.3-2.4z" fill="none" stroke="#7a7a7a" stroke-width="0.8"/></g></g></svg>
<svg style="left:821px;top:104px" width="119" height="20"><rect x="1.95" y="2.15" width="115.00" height="15.40" rx="7.75" fill="none" stroke="#f0696f" stroke-width="3.7"/></svg>
<svg style="left:630px;top:130px" width="350" height="60" viewBox="0 0 350 60"><text x="14.2" y="41.3" font-family="'Liberation Sans','Noto Sans CJK JP',sans-serif" font-weight="900" font-size="27.4" letter-spacing="-0.18" fill="#f2545d" stroke="#ffffff" stroke-width="7.2" stroke-linejoin="round" paint-order="stroke">カラーグループができた！</text></svg>
</div>
</body></html>
